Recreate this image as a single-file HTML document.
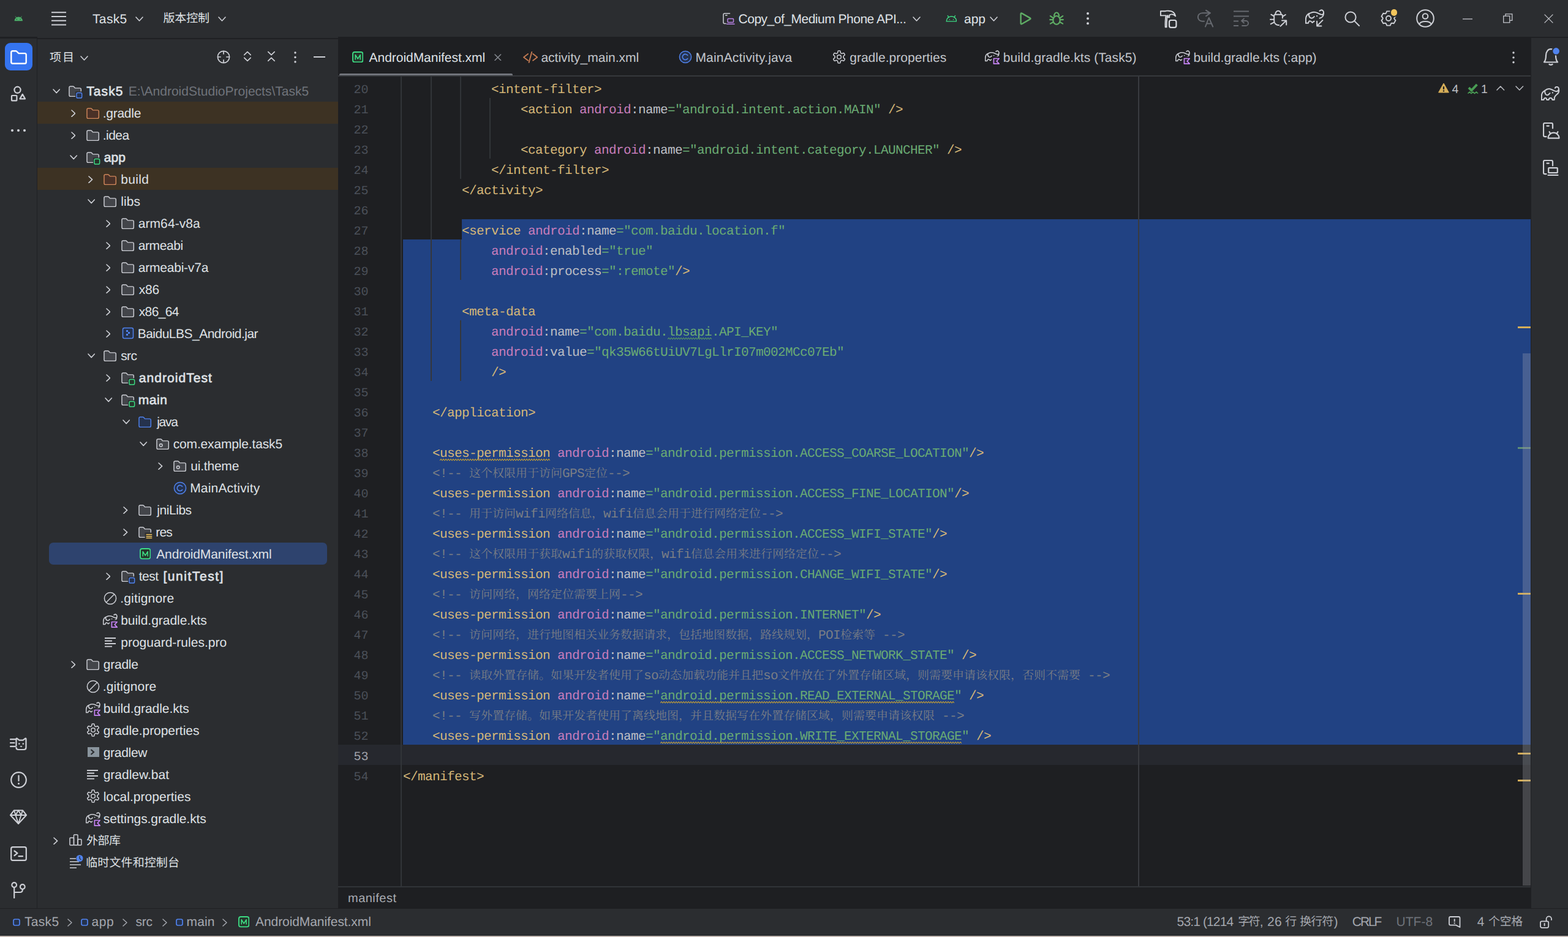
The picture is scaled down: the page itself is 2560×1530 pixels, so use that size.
<!DOCTYPE html>
<html lang="zh-CN"><head><meta charset="utf-8"><title>Task5 – AndroidManifest.xml</title>
<style>
html,body{margin:0;padding:0;background:#2b2d30;}
body{width:2560px;height:1530px;position:relative;overflow:hidden;font-family:'Liberation Sans',sans-serif;text-rendering:geometricPrecision;-webkit-font-smoothing:antialiased;}
.cl{position:absolute;left:658px;height:33px;line-height:33px;white-space:pre;font-family:'Liberation Mono',monospace;font-size:21px;letter-spacing:-0.602px;color:#bcbec4;margin-top:4.4px}
.t{display:inline-block;overflow:visible;white-space:pre;vertical-align:top;height:33px}
.k{font-family:'Liberation Mono','Noto Serif CJK SC',serif;font-size:19px;letter-spacing:0;color:#7a7e85;overflow:visible}
.ln{position:absolute;left:552px;width:49.4px;height:33px;line-height:33px;text-align:right;font-family:'Liberation Mono',monospace;font-size:20px;letter-spacing:0;margin-top:3.6px}
</style></head>
<body>
<div style="position:absolute;left:0px;top:0px;width:2560px;height:1530px;background:#2b2d30;"></div>
<div style="position:absolute;left:0px;top:60px;width:61px;height:3px;background:#1f2023;"></div>
<div style="position:absolute;left:61px;top:62px;width:491px;height:2px;background:#1f2023;"></div>
<div style="position:absolute;left:60px;top:62px;width:1px;height:1422px;background:#1f2023;"></div>
<div style="position:absolute;left:552px;top:60px;width:1948px;height:1424px;background:#1e1f22;"></div>
<div style="position:absolute;left:2499px;top:62px;width:1px;height:1422px;background:#1f2023;"></div>
<div style="position:absolute;left:2500px;top:60px;width:60px;height:2px;background:#1f2023;"></div>
<div style="position:absolute;left:0px;top:1483px;width:2560px;height:1px;background:#1f2023;"></div>
<div style="position:absolute;left:0px;top:1527px;width:2560px;height:1px;background:#202326;"></div>
<div style="position:absolute;left:0px;top:1528px;width:2560px;height:2px;background:#c3b8b2;"></div>
<svg style="position:absolute;left:22.5px;top:25.5px" width="14.5" height="9" viewBox="0 0 24 14" fill="none" ><path d="M1 13 A11 11 0 0 1 23 13 Z" fill="#4caf6a"/><path d="M6.2 4.6 L3.8 0.8 M17.8 4.6 L20.2 0.8" stroke="#4caf6a" stroke-width="1.4" stroke-linecap="round"/><circle cx="7.2" cy="8.6" r="1.1" fill="#2b2d30"/><circle cx="16.8" cy="8.6" r="1.1" fill="#2b2d30"/></svg>
<svg style="position:absolute;left:84px;top:18.6px" width="24" height="23" viewBox="0 0 24 23" fill="none" ><path d="M0 1.2 H24 M0 8 H24 M0 14.8 H24 M0 21.6 H24" stroke="#ced0d6" stroke-width="2"/></svg>
<div style="position:absolute;left:151.00px;top:17px;height:30px;line-height:30px;font-family:'Liberation Sans',sans-serif;font-size:21px;color:#dfe1e5;white-space:pre;letter-spacing:0.350px;">Task5</div>
<svg style="position:absolute;left:220.7px;top:26.5px" width="13" height="8" viewBox="-1 -1 13 8" fill="none" ><path d="M0 0 L5.5 6 L11 0" stroke="#ced0d6" stroke-width="1.6" stroke-linecap="round" stroke-linejoin="round"/></svg>
<div style="position:absolute;left:266.50px;top:16px;height:30px;line-height:30px;font-family:'Liberation Sans','Noto Sans CJK SC',sans-serif;font-size:19px;color:#dfe1e5;white-space:pre;letter-spacing:-0.167px;">版本控制</div>
<svg style="position:absolute;left:355.7px;top:26.5px" width="13" height="8" viewBox="-1 -1 13 8" fill="none" ><path d="M0 0 L5.5 6 L11 0" stroke="#ced0d6" stroke-width="1.6" stroke-linecap="round" stroke-linejoin="round"/></svg>
<svg style="position:absolute;left:1180px;top:21px" width="20" height="20" viewBox="0 0 20 20" fill="none" ><path d="M11.5 1 H3 Q1 1 1 3 V15.5 Q1 17.5 3 17.5 H5" stroke="#ced0d6" stroke-width="1.5" stroke-linecap="round" stroke-linejoin="round"/><path d="M4.5 4 H7" stroke="#ced0d6" stroke-width="1.5" stroke-linecap="round"/><rect x="8" y="9.5" width="9.5" height="6" rx="1" stroke="#b982e6" stroke-width="1.5"/><path d="M6.5 18.2 H19" stroke="#b982e6" stroke-width="1.5" stroke-linecap="round"/></svg>
<div style="position:absolute;left:1205.60px;top:17px;height:30px;line-height:30px;font-family:'Liberation Sans',sans-serif;font-size:21px;color:#dfe1e5;white-space:pre;letter-spacing:-0.500px;">Copy_of_Medium Phone API...</div>
<svg style="position:absolute;left:1489.8px;top:26.5px" width="13" height="8" viewBox="-1 -1 13 8" fill="none" ><path d="M0 0 L5.5 6 L11 0" stroke="#ced0d6" stroke-width="1.6" stroke-linecap="round" stroke-linejoin="round"/></svg>
<svg style="position:absolute;left:1543.6px;top:23.8px" width="18.8" height="12.4" viewBox="0 0 24 14" fill="none" ><path d="M1.5 13 A10.5 10.5 0 0 1 22.5 13 Z" stroke="#3ddc84" stroke-width="1.8" stroke-linejoin="round"/><path d="M6.4 4.8 L4.2 1 M17.6 4.8 L19.8 1" stroke="#3ddc84" stroke-width="1.8" stroke-linecap="round"/><circle cx="8" cy="9" r="1.1" fill="#3ddc84"/><circle cx="16" cy="9" r="1.1" fill="#3ddc84"/></svg>
<div style="position:absolute;left:1574.00px;top:17px;height:30px;line-height:30px;font-family:'Liberation Sans',sans-serif;font-size:21px;color:#dfe1e5;white-space:pre;letter-spacing:0.000px;">app</div>
<svg style="position:absolute;left:1615.8px;top:27.0px" width="13" height="8" viewBox="-1 -1 13 8" fill="none" ><path d="M0 0 L5.5 6 L11 0" stroke="#ced0d6" stroke-width="1.6" stroke-linecap="round" stroke-linejoin="round"/></svg>
<svg style="position:absolute;left:1664.8px;top:19.7px" width="20" height="22" viewBox="0 0 20 22" fill="none" ><path d="M1.6 3 Q1.6 0.8 3.5 1.9 L16.6 9.4 Q18.4 10.4 16.6 11.4 L3.5 19 Q1.6 20 1.6 17.8 Z" stroke="#5fad65" stroke-width="2.4" stroke-linejoin="round"/></svg>
<svg style="position:absolute;left:1713px;top:19px" width="24" height="22" viewBox="0 0 24 22" fill="none" ><ellipse cx="12" cy="13.9" rx="5.7" ry="6.9" stroke="#5fad65" stroke-width="2.2"/><path d="M7.9 7.6 A4.1 6.1 0 0 1 16.1 7.6" stroke="#5fad65" stroke-width="2.2"/><path d="M6.5 10.4 L1.8 7.2 M6.2 13.2 H1.2 M6.6 17 L1.9 19.6 M17.5 10.4 L22.2 7.2 M17.8 13.2 H22.8 M17.4 17 L22.1 19.6" stroke="#5fad65" stroke-width="2.2" stroke-linecap="round"/></svg>
<svg style="position:absolute;left:1772.9px;top:19.0px" width="6" height="22.3" viewBox="-3 -11.15 6 22.3" fill="none" ><circle cx="0" cy="-8.15" r="2.0" fill="#ced0d6"/><circle cx="0" cy="0" r="2.0" fill="#ced0d6"/><circle cx="0" cy="8.15" r="2.0" fill="#ced0d6"/></svg>
<svg style="position:absolute;left:1893px;top:15.6px" width="29" height="31" viewBox="0 0 29 31" fill="none" ><path d="M1.9 2.3 H9 C11 1.3 14 1.6 15.5 1.8 C21 2 25 5 26.2 10.4 C23 7 19 6.6 16.2 8.8 V12.4 H13.8 V9.4 H12.7 C12.2 14 11.5 18 11.6 28.3 H9.6 C9.3 20 9.8 14 10.6 9.4 H1.9 Z" stroke="#d7d9de" stroke-width="1.9" stroke-linecap="round" stroke-linejoin="round"/><rect x="16" y="17" width="11.4" height="11.8" rx="2.8" stroke="#d7d9de" stroke-width="2.2"/></svg>
<svg style="position:absolute;left:1954.6px;top:16px" width="27" height="29" viewBox="0 0 27 29" fill="none" ><path d="M21 5.3 H8.5 C3 5.3 0.9 9 0.9 12 C0.9 15.5 3.5 18.7 8 18.7 H11 M14 0.8 L21 5.3 L14 10.2" stroke="#676a70" stroke-width="2" stroke-linecap="round" stroke-linejoin="round"/><path d="M13 27.5 L18.7 13 L25.2 27.5 M15 22.5 H23" stroke="#676a70" stroke-width="2" stroke-linecap="round" stroke-linejoin="round"/></svg>
<svg style="position:absolute;left:2014.4px;top:16.6px" width="26" height="27" viewBox="0 0 26 27" fill="none" ><path d="M0 1.5 H25 M0 9.5 H25 M0 17.5 H8 M0 25 H8" stroke="#676a70" stroke-width="1.8"/><path d="M14 25 H20 A4 4 0 0 0 20 17 H13.5 M17 13.5 L13 17 L17 20.5" stroke="#676a70" stroke-width="1.8" stroke-linecap="round" stroke-linejoin="round"/></svg>
<svg style="position:absolute;left:2073px;top:16px" width="29" height="29" viewBox="0 0 29 29" fill="none" ><path d="M9.2 7.5 A4.6 5.8 0 0 1 18.5 7.5" stroke="#ced0d6" stroke-width="2"/><path d="M20.9 13.5 V9.7 Q20.9 7.7 18.9 7.7 H9.2 Q7.2 7.7 7.2 9.7 V18 A6.9 6.9 0 0 0 15.1 25" stroke="#ced0d6" stroke-width="2" stroke-linecap="round" stroke-linejoin="round"/><path d="M2.3 7.7 L6.7 10.4 M0.9 15.7 H6.7 M1.8 23.2 L6.7 20.6 M21.3 10.8 L25.8 8" stroke="#ced0d6" stroke-width="2" stroke-linecap="round"/><path d="M17.4 26.8 L27 17.6 M20 17.6 H27.2 V24.6" stroke="#ced0d6" stroke-width="2" stroke-linecap="round" stroke-linejoin="round"/></svg>
<svg style="position:absolute;left:2131.3px;top:15.4px" width="32" height="29" viewBox="0 0 32 29" fill="none" ><path d="M0.9 22.8 V17 C0.9 11.5 4 7.7 8 6.5 C12 4.2 17 4.8 20 6.2 C23 7.6 25 9.2 28 9 C30.5 8.6 30.6 4.5 29 2.6 C27.5 0.9 25 1.6 23.5 2.8" stroke="#ced0d6" stroke-width="2" stroke-linecap="round" stroke-linejoin="round"/><path d="M29.6 7 C30 10 28.5 13.4 23.5 14.8" stroke="#ced0d6" stroke-width="2" stroke-linecap="round" stroke-linejoin="round"/><path d="M6 7.6 C5.6 10 6.2 12.6 8.5 14.2 C11 15.6 13.5 13.5 14.7 12.1" stroke="#ced0d6" stroke-width="2" stroke-linecap="round" stroke-linejoin="round"/><circle cx="19.1" cy="11.2" r="1.15" fill="#ced0d6"/><path d="M0.9 22.8 H4.9 C5.2 21 5.6 20.2 6.8 19.4 C8.5 18.6 9.8 20 11.5 21.9 C13 20.5 13.8 20 14.7 19.7" stroke="#ced0d6" stroke-width="2" stroke-linecap="round" stroke-linejoin="round"/><path d="M28.4 18.1 L19.3 27.2 M19.1 19.7 V27.4 H26.4" stroke="#ced0d6" stroke-width="2" stroke-linecap="round" stroke-linejoin="round"/></svg>
<svg style="position:absolute;left:2194.6px;top:18.2px" width="25" height="25" viewBox="0 0 25 25" fill="none" ><circle cx="10" cy="10" r="8.6" stroke="#ced0d6" stroke-width="2"/><path d="M16.4 16.4 L24 24" stroke="#ced0d6" stroke-width="2" stroke-linecap="round"/></svg>
<svg style="position:absolute;left:2253.6px;top:16px" width="26" height="28.0" viewBox="0 -1 26 28" fill="none" ><path d="M10.10 1.36 L15.90 1.36 Q16.35 3.79 17.60 5.03 Q19.30 5.49 21.63 4.66 L24.54 9.69 Q22.65 11.30 22.20 13.00 Q22.65 14.70 24.54 16.31 L21.63 21.34 Q19.30 20.51 17.60 20.97 Q16.35 22.21 15.90 24.64 L10.10 24.64 Q9.65 22.21 8.40 20.97 Q6.70 20.51 4.37 21.34 L1.46 16.31 Q3.35 14.70 3.80 13.00 Q3.35 11.30 1.46 9.69 L4.37 4.66 Q6.70 5.49 8.40 5.03 Q9.65 3.79 10.10 1.36 Z" stroke="#ced0d6" stroke-width="1.9" stroke-linejoin="round"/><circle cx="13" cy="13" r="4" stroke="#ced0d6" stroke-width="1.9"/></svg>
<div style="position:absolute;left:2268.8px;top:13.400000000000002px;width:14.4px;height:14.4px;border-radius:50%;background:#2b2d30"></div>
<div style="position:absolute;left:2270.6px;top:15.200000000000001px;width:10.8px;height:10.8px;border-radius:50%;background:#f2c55c"></div>
<svg style="position:absolute;left:2312px;top:14.8px" width="30" height="30" viewBox="0 0 30 30" fill="none" ><circle cx="15" cy="15" r="13.8" stroke="#ced0d6" stroke-width="2"/><circle cx="15" cy="11.5" r="4.3" stroke="#ced0d6" stroke-width="2"/><path d="M5.2 24.6 C8 18.6 22 18.6 24.8 24.6" stroke="#ced0d6" stroke-width="2" stroke-linecap="round"/></svg>
<svg style="position:absolute;left:2388px;top:29.5px" width="16" height="2" viewBox="0 0 16 2" fill="none" ><path d="M0 1 H16" stroke="#c4c6cc" stroke-width="1.3"/></svg>
<svg style="position:absolute;left:2454px;top:22px" width="16" height="16" viewBox="0 0 16 16" fill="none" ><path d="M0.7 4.2 H10.8 V14.8 H0.7 Z" stroke="#c4c6cc" stroke-width="1.3"/><path d="M4 4 V0.8 H14.8 V11.4 H11" stroke="#c4c6cc" stroke-width="1.3"/></svg>
<svg style="position:absolute;left:2521px;top:23px" width="15" height="15" viewBox="0 0 15 15" fill="none" ><path d="M0.6 0.6 L14.4 14.4 M14.4 0.6 L0.6 14.4" stroke="#c4c6cc" stroke-width="1.3"/></svg>
<div style="position:absolute;left:8px;top:70px;width:45px;height:45px;border-radius:9px;background:#3574f0"></div>
<svg style="position:absolute;left:16.5px;top:81.5px" width="27" height="23" viewBox="0 0 27 23" fill="none" ><path d="M1.3 3.6 Q1.3 1.3 3.6 1.3 H8.6 Q9.6 1.3 10.3 2 L13 4.6 Q13.5 5.1 14.3 5.1 H23.4 Q25.7 5.1 25.7 7.4 V19.4 Q25.7 21.7 23.4 21.7 H3.6 Q1.3 21.7 1.3 19.4 Z" stroke="#ffffff" stroke-width="2.4" stroke-linejoin="round"/></svg>
<svg style="position:absolute;left:17px;top:139.5px" width="27" height="27" viewBox="0 0 27 27" fill="none" ><circle cx="11.5" cy="6.8" r="5.1" stroke="#ced0d6" stroke-width="2.2"/><rect x="2" y="16" width="8.4" height="8.3" rx="0.8" stroke="#ced0d6" stroke-width="2.2"/><path d="M19.75 13.9 L24 21.4 H15.5 Z" stroke="#ced0d6" stroke-width="2.2" stroke-linejoin="round"/></svg>
<svg style="position:absolute;left:17px;top:210px" width="26" height="6" viewBox="0 0 26 6" fill="none" ><circle cx="3" cy="3" r="2.1" fill="#ced0d6"/><circle cx="13" cy="3" r="2.1" fill="#ced0d6"/><circle cx="23" cy="3" r="2.1" fill="#ced0d6"/></svg>
<svg style="position:absolute;left:16.4px;top:1204px" width="28" height="22" viewBox="0 0 28 22" fill="none" ><path d="M1 3.2 H9.5 M1 9 H7.5 M1 14.8 H9" stroke="#ced0d6" stroke-width="2.2" stroke-linecap="round"/><path d="M10.5 14 V2.6 Q10.5 1 11.8 1.8 L15.5 4.6 H21.5 L25.2 1.8 Q26.5 1 26.5 2.6 V16.5 Q26.5 20 23 20 H14 Q10.5 20 10.5 16.5" stroke="#ced0d6" stroke-width="2.2" stroke-linecap="round" stroke-linejoin="round"/><circle cx="15.3" cy="10.5" r="1.3" fill="#ced0d6"/><circle cx="21.8" cy="10.5" r="1.3" fill="#ced0d6"/><path d="M17 14.4 H20 L18.5 16 Z" fill="#ced0d6" stroke="#ced0d6" stroke-width="0.8" stroke-linejoin="round"/></svg>
<svg style="position:absolute;left:16.5px;top:1260.4px" width="27" height="27" viewBox="0 0 27 27" fill="none" ><circle cx="13.5" cy="13.5" r="12.3" stroke="#ced0d6" stroke-width="2.2"/><path d="M13.5 6.5 V15" stroke="#ced0d6" stroke-width="2.2" stroke-linecap="round"/><circle cx="13.5" cy="19.6" r="1.5" fill="#ced0d6"/></svg>
<svg style="position:absolute;left:16px;top:1321.6px" width="28" height="24" viewBox="0 0 28 24" fill="none" ><path d="M7 1.2 H21 L27 9 L14 23 L1 9 Z" stroke="#ced0d6" stroke-width="2.1" stroke-linejoin="round"/><path d="M1 9 H27 M7 1.2 L9.5 9 L14 23 L18.5 9 L21 1.2 M9.5 9 L14 1.2 L18.5 9" stroke="#ced0d6" stroke-width="1.9" stroke-linejoin="round"/></svg>
<svg style="position:absolute;left:16.5px;top:1382px" width="27" height="24" viewBox="0 0 27 24" fill="none" ><rect x="1.2" y="1.2" width="24.6" height="21.6" rx="2.6" stroke="#ced0d6" stroke-width="2.2"/><path d="M6.5 7.5 L11.5 11.2 L6.5 15 M13.5 16.2 H20" stroke="#ced0d6" stroke-width="2.2" stroke-linecap="round" stroke-linejoin="round"/></svg>
<svg style="position:absolute;left:17.6px;top:1440.2px" width="24" height="27" viewBox="0 0 24 27" fill="none" ><circle cx="5.2" cy="5" r="3.8" stroke="#ced0d6" stroke-width="2.2"/><circle cx="18.8" cy="8" r="3.8" stroke="#ced0d6" stroke-width="2.2"/><path d="M5.2 9 V26 M18.8 12 V13 Q18.8 17 14.5 17 H5.2" stroke="#ced0d6" stroke-width="2.2" stroke-linecap="round" stroke-linejoin="round"/></svg>
<svg style="position:absolute;left:2518.5px;top:77px" width="29" height="31" viewBox="0 -2 29 31" fill="none" ><path d="M2 22.5 C5 19 5 16 5 11.5 C5 5.5 8.5 1.2 13 1.2 C17.5 1.2 21 5.5 21 11.5 C21 16 21 19 24 22.5 Z" stroke="#ced0d6" stroke-width="2.2" stroke-linejoin="round"/><path d="M10.5 26 Q13 27.8 15.5 26" stroke="#ced0d6" stroke-width="2.2" stroke-linecap="round"/><circle cx="21.6" cy="4.4" r="7.2" fill="#2b2d30"/><circle cx="21.6" cy="4.4" r="5.3" fill="#5083ee"/></svg>
<svg style="position:absolute;left:2515.6px;top:141.2px" width="31" height="23.5" viewBox="0 0 31 23.5" fill="none" ><path d="M0.9 21.9 V15.5 C0.9 11.5 3 8.5 6.1 7.1 C8.5 5 10.5 4 13 4 C16 4 18 5.6 20.5 6.8 C22.5 7.8 24 8.6 25.5 8.2 C27.8 7.6 29.4 5.6 28.8 3.2 C28.2 1 26 0.4 24.6 1 C23.6 1.5 23.1 2.1 22.9 2.7" stroke="#ced0d6" stroke-width="2" stroke-linecap="round" stroke-linejoin="round"/><path d="M29.2 6 C29.4 9 28 11.5 26 13 C24 14.6 22.4 16 21.9 18 L21.6 21.9 H18.5 C18.3 20 17 18.9 15.5 18.9 C14 18.9 12.7 20 12.5 21.9 H9.4 C9.2 20 8.4 18.9 7 18.9 C5.6 18.9 4.6 20 4.4 21.9 H0.9" stroke="#ced0d6" stroke-width="2" stroke-linecap="round" stroke-linejoin="round"/><path d="M6.1 7.1 C6 9.5 6.4 11.5 7.6 13 C9 14.8 11 14.6 12.4 13.3 C13.2 12.5 13.9 11.7 14.5 11.1" stroke="#ced0d6" stroke-width="2" stroke-linecap="round" stroke-linejoin="round"/><circle cx="18.9" cy="10.4" r="1.15" fill="#ced0d6"/></svg>
<svg style="position:absolute;left:2518.6px;top:200.4px" width="28" height="27" viewBox="0 0 28 27" fill="none" ><path d="M16 9.5 V3.2 Q16 1 13.8 1 H3.2 Q1 1 1 3.2 V21 Q1 23.2 3.2 23.2 H5.5" stroke="#ced0d6" stroke-width="2.2" stroke-linecap="round" stroke-linejoin="round"/><path d="M6.5 5.6 H9.8" stroke="#ced0d6" stroke-width="2.2" stroke-linecap="round"/><path d="M8.5 25.6 A9 9 0 0 1 26.5 25.6 Z" stroke="#ced0d6" stroke-width="2.2" stroke-linejoin="round"/><path d="M12.4 18.4 L10.6 15.2 M22.6 18.4 L24.4 15.2" stroke="#ced0d6" stroke-width="2.2" stroke-linecap="round"/></svg>
<svg style="position:absolute;left:2518.6px;top:260.6px" width="26" height="27" viewBox="0 0 26 27" fill="none" ><path d="M16 9.5 V3.2 Q16 1 13.8 1 H3.2 Q1 1 1 3.2 V21 Q1 23.2 3.2 23.2 H5.5" stroke="#ced0d6" stroke-width="2.2" stroke-linecap="round" stroke-linejoin="round"/><path d="M6.5 5.6 H9.8" stroke="#ced0d6" stroke-width="2.2" stroke-linecap="round"/><rect x="9.2" y="13.2" width="14.6" height="8" rx="0.8" stroke="#ced0d6" stroke-width="2.2"/><path d="M8.5 25 H24.5" stroke="#ced0d6" stroke-width="2.2" stroke-linecap="round"/></svg>
<div style="position:absolute;left:81.00px;top:80px;height:30px;line-height:30px;font-family:'Liberation Sans','Noto Sans CJK SC',sans-serif;font-size:19px;color:#dfe1e5;white-space:pre;letter-spacing:2.000px;">项目</div>
<svg style="position:absolute;left:130.5px;top:91.2px" width="13" height="8" viewBox="-1 -1 13 8" fill="none" ><path d="M0 0 L5.5 6 L11 0" stroke="#ced0d6" stroke-width="1.6" stroke-linecap="round" stroke-linejoin="round"/></svg>
<svg style="position:absolute;left:354px;top:82px" width="22" height="22" viewBox="0 0 22 22" fill="none" ><circle cx="11" cy="11" r="9.6" stroke="#ced0d6" stroke-width="1.7"/><path d="M11 1.4 V6.8 M11 15.2 V20.6 M1.4 11 H6.8 M15.2 11 H20.6" stroke="#ced0d6" stroke-width="1.7"/></svg>
<svg style="position:absolute;left:397px;top:83.4px" width="14" height="18" viewBox="0 0 14 18" fill="none" ><path d="M1.8 6.7 L7 1.6 L12.2 6.7 M1.8 11.3 L7 16.4 L12.2 11.3" stroke="#ced0d6" stroke-width="1.7" stroke-linecap="round" stroke-linejoin="round"/></svg>
<svg style="position:absolute;left:436px;top:83.4px" width="14" height="18" viewBox="0 0 14 18" fill="none" ><path d="M1.8 1.6 L7 6.7 L12.2 1.6 M1.8 16.4 L7 11.3 L12.2 16.4" stroke="#ced0d6" stroke-width="1.7" stroke-linecap="round" stroke-linejoin="round"/></svg>
<svg style="position:absolute;left:479px;top:82.5px" width="6" height="21.0" viewBox="-3 -10.5 6 21.0" fill="none" ><circle cx="0" cy="-7.5" r="1.7" fill="#ced0d6"/><circle cx="0" cy="0" r="1.7" fill="#ced0d6"/><circle cx="0" cy="7.5" r="1.7" fill="#ced0d6"/></svg>
<div style="position:absolute;left:511.5px;top:92px;width:19.5px;height:1.7px;background:#ced0d6"></div>
<svg style="position:absolute;left:85.8px;top:145.0px" width="12.4" height="7.6" viewBox="-1 -1 12.4 7.6" fill="none" ><path d="M0 0 L5.2 5.6 L10.4 0" stroke="#ced0d6" stroke-width="1.6" stroke-linecap="round" stroke-linejoin="round"/></svg>
<svg style="position:absolute;left:112.0px;top:139.6px" width="24.2" height="23.2" viewBox="0 0 25 24" fill="none" ><path d="M1 3.2 Q1 1 3.2 1 H7.3 Q8.2 1 8.8 1.6 L10.6 3.6 Q11 4 11.6 4 H18.8 Q21 4 21 6.2 V15.8 Q21 18 18.8 18 H3.2 Q1 18 1 15.8 Z" fill="#43454a" stroke="#ced0d6" stroke-width="1.5" stroke-linejoin="round"/><rect x="11.4" y="9.8" width="13" height="13" fill="#2b2d30"/><rect x="13.4" y="11.8" width="9" height="9" rx="2.2" fill="#25324d" stroke="#5083ee" stroke-width="1.5"/></svg>
<div style="position:absolute;left:141.20px;top:135px;height:30px;line-height:30px;font-family:'Liberation Sans',sans-serif;font-size:21px;color:#dfe1e5;white-space:pre;-webkit-text-stroke:0.65px currentColor;letter-spacing:1.100px;">Task5</div>
<div style="position:absolute;left:209.80px;top:135px;height:30px;line-height:30px;font-family:'Liberation Sans',sans-serif;font-size:21px;color:#6f737a;white-space:pre;letter-spacing:0.007px;">E:\AndroidStudioProjects\Task5</div>
<div style="position:absolute;left:61px;top:166px;width:491px;height:36px;background:#3d3223;"></div>
<svg style="position:absolute;left:115.8px;top:178.5px" width="7.6" height="12.4" viewBox="-1 -1 7.6 12.4" fill="none" ><path d="M0 0 L5.6 5.2 L0 10.4" stroke="#ced0d6" stroke-width="1.6" stroke-linecap="round" stroke-linejoin="round"/></svg>
<svg style="position:absolute;left:140.5px;top:175.6px" width="24.2" height="23.2" viewBox="0 0 25 24" fill="none" ><path d="M1 3.2 Q1 1 3.2 1 H7.3 Q8.2 1 8.8 1.6 L10.6 3.6 Q11 4 11.6 4 H18.8 Q21 4 21 6.2 V15.8 Q21 18 18.8 18 H3.2 Q1 18 1 15.8 Z" fill="#4a3127" stroke="#d0875b" stroke-width="1.5" stroke-linejoin="round"/></svg>
<div style="position:absolute;left:167.70px;top:171px;height:30px;line-height:30px;font-family:'Liberation Sans',sans-serif;font-size:21px;color:#dfe1e5;white-space:pre;letter-spacing:-0.250px;">.gradle</div>
<svg style="position:absolute;left:115.8px;top:214.5px" width="7.6" height="12.4" viewBox="-1 -1 7.6 12.4" fill="none" ><path d="M0 0 L5.6 5.2 L0 10.4" stroke="#ced0d6" stroke-width="1.6" stroke-linecap="round" stroke-linejoin="round"/></svg>
<svg style="position:absolute;left:140.5px;top:211.6px" width="24.2" height="23.2" viewBox="0 0 25 24" fill="none" ><path d="M1 3.2 Q1 1 3.2 1 H7.3 Q8.2 1 8.8 1.6 L10.6 3.6 Q11 4 11.6 4 H18.8 Q21 4 21 6.2 V15.8 Q21 18 18.8 18 H3.2 Q1 18 1 15.8 Z" fill="#43454a" stroke="#ced0d6" stroke-width="1.5" stroke-linejoin="round"/></svg>
<div style="position:absolute;left:167.70px;top:207px;height:30px;line-height:30px;font-family:'Liberation Sans',sans-serif;font-size:21px;color:#dfe1e5;white-space:pre;letter-spacing:-0.525px;">.idea</div>
<svg style="position:absolute;left:114.3px;top:253.0px" width="12.4" height="7.6" viewBox="-1 -1 12.4 7.6" fill="none" ><path d="M0 0 L5.2 5.6 L10.4 0" stroke="#ced0d6" stroke-width="1.6" stroke-linecap="round" stroke-linejoin="round"/></svg>
<svg style="position:absolute;left:140.5px;top:247.6px" width="24.2" height="23.2" viewBox="0 0 25 24" fill="none" ><path d="M1 3.2 Q1 1 3.2 1 H7.3 Q8.2 1 8.8 1.6 L10.6 3.6 Q11 4 11.6 4 H18.8 Q21 4 21 6.2 V15.8 Q21 18 18.8 18 H3.2 Q1 18 1 15.8 Z" fill="#43454a" stroke="#ced0d6" stroke-width="1.5" stroke-linejoin="round"/><rect x="11.4" y="9.8" width="13" height="13" fill="#2b2d30"/><rect x="13.4" y="11.8" width="9" height="9" rx="2.2" fill="#25352b" stroke="#3ddc84" stroke-width="1.5"/></svg>
<div style="position:absolute;left:169.70px;top:243px;height:30px;line-height:30px;font-family:'Liberation Sans',sans-serif;font-size:21px;color:#dfe1e5;white-space:pre;-webkit-text-stroke:0.65px currentColor;letter-spacing:0.150px;">app</div>
<div style="position:absolute;left:61px;top:274px;width:491px;height:36px;background:#3d3223;"></div>
<svg style="position:absolute;left:144.29999999999998px;top:286.5px" width="7.6" height="12.4" viewBox="-1 -1 7.6 12.4" fill="none" ><path d="M0 0 L5.6 5.2 L0 10.4" stroke="#ced0d6" stroke-width="1.6" stroke-linecap="round" stroke-linejoin="round"/></svg>
<svg style="position:absolute;left:169.0px;top:283.6px" width="24.2" height="23.2" viewBox="0 0 25 24" fill="none" ><path d="M1 3.2 Q1 1 3.2 1 H7.3 Q8.2 1 8.8 1.6 L10.6 3.6 Q11 4 11.6 4 H18.8 Q21 4 21 6.2 V15.8 Q21 18 18.8 18 H3.2 Q1 18 1 15.8 Z" fill="#4a3127" stroke="#d0875b" stroke-width="1.5" stroke-linejoin="round"/></svg>
<div style="position:absolute;left:197.20px;top:279px;height:30px;line-height:30px;font-family:'Liberation Sans',sans-serif;font-size:21px;color:#dfe1e5;white-space:pre;letter-spacing:0.350px;">build</div>
<svg style="position:absolute;left:142.8px;top:325.0px" width="12.4" height="7.6" viewBox="-1 -1 12.4 7.6" fill="none" ><path d="M0 0 L5.2 5.6 L10.4 0" stroke="#ced0d6" stroke-width="1.6" stroke-linecap="round" stroke-linejoin="round"/></svg>
<svg style="position:absolute;left:169.0px;top:319.6px" width="24.2" height="23.2" viewBox="0 0 25 24" fill="none" ><path d="M1 3.2 Q1 1 3.2 1 H7.3 Q8.2 1 8.8 1.6 L10.6 3.6 Q11 4 11.6 4 H18.8 Q21 4 21 6.2 V15.8 Q21 18 18.8 18 H3.2 Q1 18 1 15.8 Z" fill="#43454a" stroke="#ced0d6" stroke-width="1.5" stroke-linejoin="round"/></svg>
<div style="position:absolute;left:197.20px;top:315px;height:30px;line-height:30px;font-family:'Liberation Sans',sans-serif;font-size:21px;color:#dfe1e5;white-space:pre;letter-spacing:0.067px;">libs</div>
<svg style="position:absolute;left:172.79999999999998px;top:358.5px" width="7.6" height="12.4" viewBox="-1 -1 7.6 12.4" fill="none" ><path d="M0 0 L5.6 5.2 L0 10.4" stroke="#ced0d6" stroke-width="1.6" stroke-linecap="round" stroke-linejoin="round"/></svg>
<svg style="position:absolute;left:197.5px;top:355.6px" width="24.2" height="23.2" viewBox="0 0 25 24" fill="none" ><path d="M1 3.2 Q1 1 3.2 1 H7.3 Q8.2 1 8.8 1.6 L10.6 3.6 Q11 4 11.6 4 H18.8 Q21 4 21 6.2 V15.8 Q21 18 18.8 18 H3.2 Q1 18 1 15.8 Z" fill="#43454a" stroke="#ced0d6" stroke-width="1.5" stroke-linejoin="round"/></svg>
<div style="position:absolute;left:225.70px;top:351px;height:30px;line-height:30px;font-family:'Liberation Sans',sans-serif;font-size:21px;color:#dfe1e5;white-space:pre;letter-spacing:0.087px;">arm64-v8a</div>
<svg style="position:absolute;left:172.79999999999998px;top:394.5px" width="7.6" height="12.4" viewBox="-1 -1 7.6 12.4" fill="none" ><path d="M0 0 L5.6 5.2 L0 10.4" stroke="#ced0d6" stroke-width="1.6" stroke-linecap="round" stroke-linejoin="round"/></svg>
<svg style="position:absolute;left:197.5px;top:391.6px" width="24.2" height="23.2" viewBox="0 0 25 24" fill="none" ><path d="M1 3.2 Q1 1 3.2 1 H7.3 Q8.2 1 8.8 1.6 L10.6 3.6 Q11 4 11.6 4 H18.8 Q21 4 21 6.2 V15.8 Q21 18 18.8 18 H3.2 Q1 18 1 15.8 Z" fill="#43454a" stroke="#ced0d6" stroke-width="1.5" stroke-linejoin="round"/></svg>
<div style="position:absolute;left:225.70px;top:387px;height:30px;line-height:30px;font-family:'Liberation Sans',sans-serif;font-size:21px;color:#dfe1e5;white-space:pre;letter-spacing:-0.383px;">armeabi</div>
<svg style="position:absolute;left:172.79999999999998px;top:430.5px" width="7.6" height="12.4" viewBox="-1 -1 7.6 12.4" fill="none" ><path d="M0 0 L5.6 5.2 L0 10.4" stroke="#ced0d6" stroke-width="1.6" stroke-linecap="round" stroke-linejoin="round"/></svg>
<svg style="position:absolute;left:197.5px;top:427.6px" width="24.2" height="23.2" viewBox="0 0 25 24" fill="none" ><path d="M1 3.2 Q1 1 3.2 1 H7.3 Q8.2 1 8.8 1.6 L10.6 3.6 Q11 4 11.6 4 H18.8 Q21 4 21 6.2 V15.8 Q21 18 18.8 18 H3.2 Q1 18 1 15.8 Z" fill="#43454a" stroke="#ced0d6" stroke-width="1.5" stroke-linejoin="round"/></svg>
<div style="position:absolute;left:225.70px;top:423px;height:30px;line-height:30px;font-family:'Liberation Sans',sans-serif;font-size:21px;color:#dfe1e5;white-space:pre;letter-spacing:-0.210px;">armeabi-v7a</div>
<svg style="position:absolute;left:172.79999999999998px;top:466.5px" width="7.6" height="12.4" viewBox="-1 -1 7.6 12.4" fill="none" ><path d="M0 0 L5.6 5.2 L0 10.4" stroke="#ced0d6" stroke-width="1.6" stroke-linecap="round" stroke-linejoin="round"/></svg>
<svg style="position:absolute;left:197.5px;top:463.6px" width="24.2" height="23.2" viewBox="0 0 25 24" fill="none" ><path d="M1 3.2 Q1 1 3.2 1 H7.3 Q8.2 1 8.8 1.6 L10.6 3.6 Q11 4 11.6 4 H18.8 Q21 4 21 6.2 V15.8 Q21 18 18.8 18 H3.2 Q1 18 1 15.8 Z" fill="#43454a" stroke="#ced0d6" stroke-width="1.5" stroke-linejoin="round"/></svg>
<div style="position:absolute;left:226.70px;top:459px;height:30px;line-height:30px;font-family:'Liberation Sans',sans-serif;font-size:21px;color:#dfe1e5;white-space:pre;letter-spacing:-0.150px;">x86</div>
<svg style="position:absolute;left:172.79999999999998px;top:502.5px" width="7.6" height="12.4" viewBox="-1 -1 7.6 12.4" fill="none" ><path d="M0 0 L5.6 5.2 L0 10.4" stroke="#ced0d6" stroke-width="1.6" stroke-linecap="round" stroke-linejoin="round"/></svg>
<svg style="position:absolute;left:197.5px;top:499.6px" width="24.2" height="23.2" viewBox="0 0 25 24" fill="none" ><path d="M1 3.2 Q1 1 3.2 1 H7.3 Q8.2 1 8.8 1.6 L10.6 3.6 Q11 4 11.6 4 H18.8 Q21 4 21 6.2 V15.8 Q21 18 18.8 18 H3.2 Q1 18 1 15.8 Z" fill="#43454a" stroke="#ced0d6" stroke-width="1.5" stroke-linejoin="round"/></svg>
<div style="position:absolute;left:226.70px;top:495px;height:30px;line-height:30px;font-family:'Liberation Sans',sans-serif;font-size:21px;color:#dfe1e5;white-space:pre;letter-spacing:-0.620px;">x86_64</div>
<svg style="position:absolute;left:172.79999999999998px;top:538.5px" width="7.6" height="12.4" viewBox="-1 -1 7.6 12.4" fill="none" ><path d="M0 0 L5.6 5.2 L0 10.4" stroke="#ced0d6" stroke-width="1.6" stroke-linecap="round" stroke-linejoin="round"/></svg>
<svg style="position:absolute;left:198.5px;top:534px" width="20" height="20" viewBox="0 0 20 20" fill="none" ><rect x="1.5" y="1.5" width="17" height="17" rx="2.5" fill="#25324d" stroke="#5083ee" stroke-width="1.5"/><rect x="7" y="5" width="3" height="3" fill="#5083ee"/><rect x="10" y="8" width="3" height="3" fill="#5083ee"/><rect x="7" y="11" width="3" height="3" fill="#5083ee"/></svg>
<div style="position:absolute;left:224.70px;top:531px;height:30px;line-height:30px;font-family:'Liberation Sans',sans-serif;font-size:21px;color:#dfe1e5;white-space:pre;letter-spacing:-0.511px;">BaiduLBS_Android.jar</div>
<svg style="position:absolute;left:142.8px;top:577.0px" width="12.4" height="7.6" viewBox="-1 -1 12.4 7.6" fill="none" ><path d="M0 0 L5.2 5.6 L10.4 0" stroke="#ced0d6" stroke-width="1.6" stroke-linecap="round" stroke-linejoin="round"/></svg>
<svg style="position:absolute;left:169.0px;top:571.6px" width="24.2" height="23.2" viewBox="0 0 25 24" fill="none" ><path d="M1 3.2 Q1 1 3.2 1 H7.3 Q8.2 1 8.8 1.6 L10.6 3.6 Q11 4 11.6 4 H18.8 Q21 4 21 6.2 V15.8 Q21 18 18.8 18 H3.2 Q1 18 1 15.8 Z" fill="#43454a" stroke="#ced0d6" stroke-width="1.5" stroke-linejoin="round"/></svg>
<div style="position:absolute;left:197.20px;top:567px;height:30px;line-height:30px;font-family:'Liberation Sans',sans-serif;font-size:21px;color:#dfe1e5;white-space:pre;letter-spacing:-0.600px;">src</div>
<svg style="position:absolute;left:172.79999999999998px;top:610.5px" width="7.6" height="12.4" viewBox="-1 -1 7.6 12.4" fill="none" ><path d="M0 0 L5.6 5.2 L0 10.4" stroke="#ced0d6" stroke-width="1.6" stroke-linecap="round" stroke-linejoin="round"/></svg>
<svg style="position:absolute;left:197.5px;top:607.6px" width="24.2" height="23.2" viewBox="0 0 25 24" fill="none" ><path d="M1 3.2 Q1 1 3.2 1 H7.3 Q8.2 1 8.8 1.6 L10.6 3.6 Q11 4 11.6 4 H18.8 Q21 4 21 6.2 V15.8 Q21 18 18.8 18 H3.2 Q1 18 1 15.8 Z" fill="#43454a" stroke="#ced0d6" stroke-width="1.5" stroke-linejoin="round"/><rect x="11.4" y="9.8" width="13" height="13" fill="#2b2d30"/><rect x="13.4" y="11.8" width="9" height="9" rx="2.2" fill="#25352b" stroke="#3ddc84" stroke-width="1.5"/></svg>
<div style="position:absolute;left:226.70px;top:603px;height:30px;line-height:30px;font-family:'Liberation Sans',sans-serif;font-size:21px;color:#dfe1e5;white-space:pre;-webkit-text-stroke:0.65px currentColor;letter-spacing:1.070px;">androidTest</div>
<svg style="position:absolute;left:171.3px;top:649.0px" width="12.4" height="7.6" viewBox="-1 -1 12.4 7.6" fill="none" ><path d="M0 0 L5.2 5.6 L10.4 0" stroke="#ced0d6" stroke-width="1.6" stroke-linecap="round" stroke-linejoin="round"/></svg>
<svg style="position:absolute;left:197.5px;top:643.6px" width="24.2" height="23.2" viewBox="0 0 25 24" fill="none" ><path d="M1 3.2 Q1 1 3.2 1 H7.3 Q8.2 1 8.8 1.6 L10.6 3.6 Q11 4 11.6 4 H18.8 Q21 4 21 6.2 V15.8 Q21 18 18.8 18 H3.2 Q1 18 1 15.8 Z" fill="#43454a" stroke="#ced0d6" stroke-width="1.5" stroke-linejoin="round"/><rect x="11.4" y="9.8" width="13" height="13" fill="#2b2d30"/><rect x="13.4" y="11.8" width="9" height="9" rx="2.2" fill="#25352b" stroke="#3ddc84" stroke-width="1.5"/></svg>
<div style="position:absolute;left:225.70px;top:639px;height:30px;line-height:30px;font-family:'Liberation Sans',sans-serif;font-size:21px;color:#dfe1e5;white-space:pre;-webkit-text-stroke:0.65px currentColor;letter-spacing:0.567px;">main</div>
<svg style="position:absolute;left:199.8px;top:685.0px" width="12.4" height="7.6" viewBox="-1 -1 12.4 7.6" fill="none" ><path d="M0 0 L5.2 5.6 L10.4 0" stroke="#ced0d6" stroke-width="1.6" stroke-linecap="round" stroke-linejoin="round"/></svg>
<svg style="position:absolute;left:226.0px;top:679.6px" width="24.2" height="23.2" viewBox="0 0 25 24" fill="none" ><path d="M1 3.2 Q1 1 3.2 1 H7.3 Q8.2 1 8.8 1.6 L10.6 3.6 Q11 4 11.6 4 H18.8 Q21 4 21 6.2 V15.8 Q21 18 18.8 18 H3.2 Q1 18 1 15.8 Z" fill="#25324d" stroke="#5083ee" stroke-width="1.5" stroke-linejoin="round"/></svg>
<div style="position:absolute;left:256.20px;top:675px;height:30px;line-height:30px;font-family:'Liberation Sans',sans-serif;font-size:21px;color:#dfe1e5;white-space:pre;letter-spacing:-1.267px;">java</div>
<svg style="position:absolute;left:228.3px;top:721.0px" width="12.4" height="7.6" viewBox="-1 -1 12.4 7.6" fill="none" ><path d="M0 0 L5.2 5.6 L10.4 0" stroke="#ced0d6" stroke-width="1.6" stroke-linecap="round" stroke-linejoin="round"/></svg>
<svg style="position:absolute;left:254.5px;top:715.6px" width="24.2" height="23.2" viewBox="0 0 25 24" fill="none" ><path d="M1 3.2 Q1 1 3.2 1 H7.3 Q8.2 1 8.8 1.6 L10.6 3.6 Q11 4 11.6 4 H18.8 Q21 4 21 6.2 V15.8 Q21 18 18.8 18 H3.2 Q1 18 1 15.8 Z" fill="#43454a" stroke="#ced0d6" stroke-width="1.5" stroke-linejoin="round"/><circle cx="8" cy="11.5" r="2.4" stroke="#ced0d6" stroke-width="1.5"/></svg>
<div style="position:absolute;left:282.70px;top:711px;height:30px;line-height:30px;font-family:'Liberation Sans',sans-serif;font-size:21px;color:#dfe1e5;white-space:pre;letter-spacing:-0.156px;">com.example.task5</div>
<svg style="position:absolute;left:258.3px;top:754.5px" width="7.6" height="12.4" viewBox="-1 -1 7.6 12.4" fill="none" ><path d="M0 0 L5.6 5.2 L0 10.4" stroke="#ced0d6" stroke-width="1.6" stroke-linecap="round" stroke-linejoin="round"/></svg>
<svg style="position:absolute;left:283.0px;top:751.6px" width="24.2" height="23.2" viewBox="0 0 25 24" fill="none" ><path d="M1 3.2 Q1 1 3.2 1 H7.3 Q8.2 1 8.8 1.6 L10.6 3.6 Q11 4 11.6 4 H18.8 Q21 4 21 6.2 V15.8 Q21 18 18.8 18 H3.2 Q1 18 1 15.8 Z" fill="#43454a" stroke="#ced0d6" stroke-width="1.5" stroke-linejoin="round"/><circle cx="8" cy="11.5" r="2.4" stroke="#ced0d6" stroke-width="1.5"/></svg>
<div style="position:absolute;left:311.20px;top:747px;height:30px;line-height:30px;font-family:'Liberation Sans',sans-serif;font-size:21px;color:#dfe1e5;white-space:pre;letter-spacing:-0.200px;">ui.theme</div>
<svg style="position:absolute;left:283.0px;top:786.4px" width="22" height="22" viewBox="0 0 22 22" fill="none" ><circle cx="11" cy="11" r="9.6" fill="#25324d" stroke="#5083ee" stroke-width="1.5"/><path d="M14.6 8.3 A4.6 4.6 0 1 0 14.6 13.7" stroke="#5083ee" stroke-width="1.6" stroke-linecap="round"/></svg>
<div style="position:absolute;left:310.20px;top:783px;height:30px;line-height:30px;font-family:'Liberation Sans',sans-serif;font-size:21px;color:#dfe1e5;white-space:pre;letter-spacing:0.182px;">MainActivity</div>
<svg style="position:absolute;left:201.29999999999998px;top:826.5px" width="7.6" height="12.4" viewBox="-1 -1 7.6 12.4" fill="none" ><path d="M0 0 L5.6 5.2 L0 10.4" stroke="#ced0d6" stroke-width="1.6" stroke-linecap="round" stroke-linejoin="round"/></svg>
<svg style="position:absolute;left:226.0px;top:823.6px" width="24.2" height="23.2" viewBox="0 0 25 24" fill="none" ><path d="M1 3.2 Q1 1 3.2 1 H7.3 Q8.2 1 8.8 1.6 L10.6 3.6 Q11 4 11.6 4 H18.8 Q21 4 21 6.2 V15.8 Q21 18 18.8 18 H3.2 Q1 18 1 15.8 Z" fill="#43454a" stroke="#ced0d6" stroke-width="1.5" stroke-linejoin="round"/></svg>
<div style="position:absolute;left:256.20px;top:819px;height:30px;line-height:30px;font-family:'Liberation Sans',sans-serif;font-size:21px;color:#dfe1e5;white-space:pre;letter-spacing:-0.433px;">jniLibs</div>
<svg style="position:absolute;left:201.29999999999998px;top:862.5px" width="7.6" height="12.4" viewBox="-1 -1 7.6 12.4" fill="none" ><path d="M0 0 L5.6 5.2 L0 10.4" stroke="#ced0d6" stroke-width="1.6" stroke-linecap="round" stroke-linejoin="round"/></svg>
<svg style="position:absolute;left:226.0px;top:859.6px" width="24.2" height="23.2" viewBox="0 0 25 24" fill="none" ><path d="M1 3.2 Q1 1 3.2 1 H7.3 Q8.2 1 8.8 1.6 L10.6 3.6 Q11 4 11.6 4 H18.8 Q21 4 21 6.2 V15.8 Q21 18 18.8 18 H3.2 Q1 18 1 15.8 Z" fill="#43454a" stroke="#ced0d6" stroke-width="1.5" stroke-linejoin="round"/><rect x="11" y="10" width="13" height="13" fill="#2b2d30"/><path d="M13 13.2 H23 M13 16.2 H23 M13 19.2 H23" stroke="#f2c55c" stroke-width="1.6"/></svg>
<div style="position:absolute;left:254.20px;top:855px;height:30px;line-height:30px;font-family:'Liberation Sans',sans-serif;font-size:21px;color:#dfe1e5;white-space:pre;letter-spacing:-0.800px;">res</div>
<div style="position:absolute;left:80px;top:886px;width:454px;height:36px;border-radius:7px;background:#2e436e"></div>
<svg style="position:absolute;left:227.5px;top:895.2px" width="18.4" height="18.4" viewBox="0 0 19 19" fill="none" ><rect x="1" y="1" width="17" height="17" rx="3.2" fill="#25352b" stroke="#3ddc84" stroke-width="1.9"/><path d="M5.4 13.5 V5.8 L9.5 12.4 L13.6 5.8 V13.5" stroke="#3ddc84" stroke-width="1.6" stroke-linejoin="round" stroke-linecap="round"/></svg>
<div style="position:absolute;left:255.20px;top:891px;height:30px;line-height:30px;font-family:'Liberation Sans',sans-serif;font-size:21px;color:#dfe1e5;white-space:pre;letter-spacing:-0.100px;">AndroidManifest.xml</div>
<svg style="position:absolute;left:172.79999999999998px;top:934.5px" width="7.6" height="12.4" viewBox="-1 -1 7.6 12.4" fill="none" ><path d="M0 0 L5.6 5.2 L0 10.4" stroke="#ced0d6" stroke-width="1.6" stroke-linecap="round" stroke-linejoin="round"/></svg>
<svg style="position:absolute;left:197.5px;top:931.6px" width="24.2" height="23.2" viewBox="0 0 25 24" fill="none" ><path d="M1 3.2 Q1 1 3.2 1 H7.3 Q8.2 1 8.8 1.6 L10.6 3.6 Q11 4 11.6 4 H18.8 Q21 4 21 6.2 V15.8 Q21 18 18.8 18 H3.2 Q1 18 1 15.8 Z" fill="#43454a" stroke="#ced0d6" stroke-width="1.5" stroke-linejoin="round"/><rect x="11.4" y="9.8" width="13" height="13" fill="#2b2d30"/><rect x="13.4" y="11.8" width="9" height="9" rx="2.2" fill="#25324d" stroke="#5083ee" stroke-width="1.5"/></svg>
<div style="position:absolute;left:226.70px;top:927px;height:30px;line-height:30px;font-family:'Liberation Sans',sans-serif;font-size:21px;color:#dfe1e5;white-space:pre;letter-spacing:-0.500px;">test</div>
<div style="position:absolute;left:266.40px;top:927px;height:30px;line-height:30px;font-family:'Liberation Sans',sans-serif;font-size:21px;color:#dfe1e5;white-space:pre;-webkit-text-stroke:0.65px currentColor;letter-spacing:1.556px;">[unitTest]</div>
<svg style="position:absolute;left:169.0px;top:966px" width="22" height="22" viewBox="0 0 22 22" fill="none" ><circle cx="11" cy="11" r="9.6" stroke="#ced0d6" stroke-width="1.5"/><path d="M4.3 17.7 L17.7 4.3" stroke="#ced0d6" stroke-width="1.5"/></svg>
<div style="position:absolute;left:196.20px;top:963px;height:30px;line-height:30px;font-family:'Liberation Sans',sans-serif;font-size:21px;color:#dfe1e5;white-space:pre;letter-spacing:0.178px;">.gitignore</div>
<svg style="position:absolute;left:168.1px;top:1001.6px" width="26" height="24" viewBox="0 0 26 24" fill="none" ><g transform="scale(0.764)"><path d="M0.9 22.8 V17 C0.9 11.5 4 7.7 8 6.5 C12 4.2 17 4.8 20 6.2 C23 7.6 25 9.2 28 9 C30.5 8.6 30.6 4.5 29 2.6 C27.5 0.9 25 1.6 23.5 2.8" stroke="#ced0d6" stroke-width="2.0" stroke-linecap="round" stroke-linejoin="round"/><path d="M29.6 7 C30 10 28.5 13.4 23.5 14.8" stroke="#ced0d6" stroke-width="2.0" stroke-linecap="round" stroke-linejoin="round"/><path d="M6 7.6 C5.6 10 6.2 12.6 8.5 14.2 C11 15.6 13.5 13.5 14.7 12.1" stroke="#ced0d6" stroke-width="2.0" stroke-linecap="round" stroke-linejoin="round"/><circle cx="19.1" cy="11.2" r="1.15" fill="#ced0d6"/><path d="M0.9 22.8 H4.9 C5.2 21 5.6 20.2 6.8 19.4 C8.5 18.6 9.8 20 11.5 21.9 C13 20.5 13.8 20 14.7 19.7" stroke="#ced0d6" stroke-width="2.0" stroke-linecap="round" stroke-linejoin="round"/></g><rect x="11.2" y="10.2" width="14" height="13.5" fill="#2b2d30"/><path d="M14.4 13.5 H23.2 L19.2 17.85 L23.2 22.2 H14.4 Z" fill="#2d2533" stroke="#c585f5" stroke-width="1.7" stroke-linejoin="round"/></svg>
<div style="position:absolute;left:197.20px;top:999px;height:30px;line-height:30px;font-family:'Liberation Sans',sans-serif;font-size:21px;color:#dfe1e5;white-space:pre;letter-spacing:-0.040px;">build.gradle.kts</div>
<svg style="position:absolute;left:170.7px;top:1041.1px" width="18" height="16" viewBox="0 0 18 16" fill="none" ><path d="M0 1 H18 M0 5.5 H12 M0 10 H18 M0 14.6 H12" stroke="#ced0d6" stroke-width="1.8"/></svg>
<div style="position:absolute;left:197.20px;top:1035px;height:30px;line-height:30px;font-family:'Liberation Sans',sans-serif;font-size:21px;color:#dfe1e5;white-space:pre;letter-spacing:0.012px;">proguard-rules.pro</div>
<svg style="position:absolute;left:115.8px;top:1078.5px" width="7.6" height="12.4" viewBox="-1 -1 7.6 12.4" fill="none" ><path d="M0 0 L5.6 5.2 L0 10.4" stroke="#ced0d6" stroke-width="1.6" stroke-linecap="round" stroke-linejoin="round"/></svg>
<svg style="position:absolute;left:140.5px;top:1075.6px" width="24.2" height="23.2" viewBox="0 0 25 24" fill="none" ><path d="M1 3.2 Q1 1 3.2 1 H7.3 Q8.2 1 8.8 1.6 L10.6 3.6 Q11 4 11.6 4 H18.8 Q21 4 21 6.2 V15.8 Q21 18 18.8 18 H3.2 Q1 18 1 15.8 Z" fill="#43454a" stroke="#ced0d6" stroke-width="1.5" stroke-linejoin="round"/></svg>
<div style="position:absolute;left:168.70px;top:1071px;height:30px;line-height:30px;font-family:'Liberation Sans',sans-serif;font-size:21px;color:#dfe1e5;white-space:pre;letter-spacing:-0.220px;">gradle</div>
<svg style="position:absolute;left:140.5px;top:1110px" width="22" height="22" viewBox="0 0 22 22" fill="none" ><circle cx="11" cy="11" r="9.6" stroke="#ced0d6" stroke-width="1.5"/><path d="M4.3 17.7 L17.7 4.3" stroke="#ced0d6" stroke-width="1.5"/></svg>
<div style="position:absolute;left:167.70px;top:1107px;height:30px;line-height:30px;font-family:'Liberation Sans',sans-serif;font-size:21px;color:#dfe1e5;white-space:pre;letter-spacing:0.122px;">.gitignore</div>
<svg style="position:absolute;left:139.6px;top:1145.6px" width="26" height="24" viewBox="0 0 26 24" fill="none" ><g transform="scale(0.764)"><path d="M0.9 22.8 V17 C0.9 11.5 4 7.7 8 6.5 C12 4.2 17 4.8 20 6.2 C23 7.6 25 9.2 28 9 C30.5 8.6 30.6 4.5 29 2.6 C27.5 0.9 25 1.6 23.5 2.8" stroke="#ced0d6" stroke-width="2.0" stroke-linecap="round" stroke-linejoin="round"/><path d="M29.6 7 C30 10 28.5 13.4 23.5 14.8" stroke="#ced0d6" stroke-width="2.0" stroke-linecap="round" stroke-linejoin="round"/><path d="M6 7.6 C5.6 10 6.2 12.6 8.5 14.2 C11 15.6 13.5 13.5 14.7 12.1" stroke="#ced0d6" stroke-width="2.0" stroke-linecap="round" stroke-linejoin="round"/><circle cx="19.1" cy="11.2" r="1.15" fill="#ced0d6"/><path d="M0.9 22.8 H4.9 C5.2 21 5.6 20.2 6.8 19.4 C8.5 18.6 9.8 20 11.5 21.9 C13 20.5 13.8 20 14.7 19.7" stroke="#ced0d6" stroke-width="2.0" stroke-linecap="round" stroke-linejoin="round"/></g><rect x="11.2" y="10.2" width="14" height="13.5" fill="#2b2d30"/><path d="M14.4 13.5 H23.2 L19.2 17.85 L23.2 22.2 H14.4 Z" fill="#2d2533" stroke="#c585f5" stroke-width="1.7" stroke-linejoin="round"/></svg>
<div style="position:absolute;left:168.70px;top:1143px;height:30px;line-height:30px;font-family:'Liberation Sans',sans-serif;font-size:21px;color:#dfe1e5;white-space:pre;letter-spacing:-0.073px;">build.gradle.kts</div>
<svg style="position:absolute;left:140.7px;top:1181.4px" width="22" height="22" viewBox="0 0 22 22" fill="none" ><path d="M11.00 1.00 L11.65 1.02 L12.31 1.09 L12.90 1.43 L13.19 2.84 L13.30 4.23 L13.64 4.63 L14.05 4.81 L14.45 5.02 L14.83 5.26 L15.20 5.53 L15.71 5.63 L16.98 5.02 L18.33 4.57 L18.93 4.91 L19.31 5.44 L19.66 6.00 L19.97 6.58 L20.24 7.17 L20.24 7.86 L19.16 8.81 L18.01 9.61 L17.84 10.10 L17.89 10.55 L17.90 11.00 L17.89 11.45 L17.84 11.90 L18.01 12.39 L19.16 13.19 L20.24 14.14 L20.24 14.83 L19.97 15.42 L19.66 16.00 L19.31 16.56 L18.93 17.09 L18.33 17.43 L16.98 16.98 L15.71 16.37 L15.20 16.47 L14.83 16.74 L14.45 16.98 L14.05 17.19 L13.64 17.37 L13.30 17.77 L13.19 19.16 L12.90 20.57 L12.31 20.91 L11.65 20.98 L11.00 21.00 L10.35 20.98 L9.69 20.91 L9.10 20.57 L8.81 19.16 L8.70 17.77 L8.36 17.37 L7.95 17.19 L7.55 16.98 L7.17 16.74 L6.80 16.47 L6.29 16.37 L5.02 16.98 L3.67 17.43 L3.07 17.09 L2.69 16.56 L2.34 16.00 L2.03 15.42 L1.76 14.83 L1.76 14.14 L2.84 13.19 L3.99 12.39 L4.16 11.90 L4.11 11.45 L4.10 11.00 L4.11 10.55 L4.16 10.10 L3.99 9.61 L2.84 8.81 L1.76 7.86 L1.76 7.17 L2.03 6.58 L2.34 6.00 L2.69 5.44 L3.07 4.91 L3.67 4.57 L5.02 5.02 L6.29 5.63 L6.80 5.53 L7.17 5.26 L7.55 5.02 L7.95 4.81 L8.36 4.63 L8.70 4.23 L8.81 2.84 L9.10 1.43 L9.69 1.09 L10.35 1.02 Z" stroke="#ced0d6" stroke-width="1.5" stroke-linejoin="round"/><circle cx="11" cy="11" r="3.3" stroke="#ced0d6" stroke-width="1.5"/></svg>
<div style="position:absolute;left:168.70px;top:1179px;height:30px;line-height:30px;font-family:'Liberation Sans',sans-serif;font-size:21px;color:#dfe1e5;white-space:pre;letter-spacing:-0.056px;">gradle.properties</div>
<svg style="position:absolute;left:142.5px;top:1220px" width="19" height="16" viewBox="0 0 19 16" fill="none" ><rect x="0" y="0" width="19" height="16" fill="#9aa7b0" opacity="0.85"/><path d="M5.5 4 L10 8 L5.5 12" stroke="#2b2d30" stroke-width="2.2"/></svg>
<div style="position:absolute;left:168.70px;top:1215px;height:30px;line-height:30px;font-family:'Liberation Sans',sans-serif;font-size:21px;color:#dfe1e5;white-space:pre;letter-spacing:-0.283px;">gradlew</div>
<svg style="position:absolute;left:142.2px;top:1257.1px" width="18" height="16" viewBox="0 0 18 16" fill="none" ><path d="M0 1 H18 M0 5.5 H12 M0 10 H18 M0 14.6 H12" stroke="#ced0d6" stroke-width="1.8"/></svg>
<div style="position:absolute;left:168.70px;top:1251px;height:30px;line-height:30px;font-family:'Liberation Sans',sans-serif;font-size:21px;color:#dfe1e5;white-space:pre;letter-spacing:-0.010px;">gradlew.bat</div>
<svg style="position:absolute;left:140.7px;top:1289.4px" width="22" height="22" viewBox="0 0 22 22" fill="none" ><path d="M11.00 1.00 L11.65 1.02 L12.31 1.09 L12.90 1.43 L13.19 2.84 L13.30 4.23 L13.64 4.63 L14.05 4.81 L14.45 5.02 L14.83 5.26 L15.20 5.53 L15.71 5.63 L16.98 5.02 L18.33 4.57 L18.93 4.91 L19.31 5.44 L19.66 6.00 L19.97 6.58 L20.24 7.17 L20.24 7.86 L19.16 8.81 L18.01 9.61 L17.84 10.10 L17.89 10.55 L17.90 11.00 L17.89 11.45 L17.84 11.90 L18.01 12.39 L19.16 13.19 L20.24 14.14 L20.24 14.83 L19.97 15.42 L19.66 16.00 L19.31 16.56 L18.93 17.09 L18.33 17.43 L16.98 16.98 L15.71 16.37 L15.20 16.47 L14.83 16.74 L14.45 16.98 L14.05 17.19 L13.64 17.37 L13.30 17.77 L13.19 19.16 L12.90 20.57 L12.31 20.91 L11.65 20.98 L11.00 21.00 L10.35 20.98 L9.69 20.91 L9.10 20.57 L8.81 19.16 L8.70 17.77 L8.36 17.37 L7.95 17.19 L7.55 16.98 L7.17 16.74 L6.80 16.47 L6.29 16.37 L5.02 16.98 L3.67 17.43 L3.07 17.09 L2.69 16.56 L2.34 16.00 L2.03 15.42 L1.76 14.83 L1.76 14.14 L2.84 13.19 L3.99 12.39 L4.16 11.90 L4.11 11.45 L4.10 11.00 L4.11 10.55 L4.16 10.10 L3.99 9.61 L2.84 8.81 L1.76 7.86 L1.76 7.17 L2.03 6.58 L2.34 6.00 L2.69 5.44 L3.07 4.91 L3.67 4.57 L5.02 5.02 L6.29 5.63 L6.80 5.53 L7.17 5.26 L7.55 5.02 L7.95 4.81 L8.36 4.63 L8.70 4.23 L8.81 2.84 L9.10 1.43 L9.69 1.09 L10.35 1.02 Z" stroke="#ced0d6" stroke-width="1.5" stroke-linejoin="round"/><circle cx="11" cy="11" r="3.3" stroke="#ced0d6" stroke-width="1.5"/></svg>
<div style="position:absolute;left:168.70px;top:1287px;height:30px;line-height:30px;font-family:'Liberation Sans',sans-serif;font-size:21px;color:#dfe1e5;white-space:pre;letter-spacing:0.020px;">local.properties</div>
<svg style="position:absolute;left:139.6px;top:1325.6px" width="26" height="24" viewBox="0 0 26 24" fill="none" ><g transform="scale(0.764)"><path d="M0.9 22.8 V17 C0.9 11.5 4 7.7 8 6.5 C12 4.2 17 4.8 20 6.2 C23 7.6 25 9.2 28 9 C30.5 8.6 30.6 4.5 29 2.6 C27.5 0.9 25 1.6 23.5 2.8" stroke="#ced0d6" stroke-width="2.0" stroke-linecap="round" stroke-linejoin="round"/><path d="M29.6 7 C30 10 28.5 13.4 23.5 14.8" stroke="#ced0d6" stroke-width="2.0" stroke-linecap="round" stroke-linejoin="round"/><path d="M6 7.6 C5.6 10 6.2 12.6 8.5 14.2 C11 15.6 13.5 13.5 14.7 12.1" stroke="#ced0d6" stroke-width="2.0" stroke-linecap="round" stroke-linejoin="round"/><circle cx="19.1" cy="11.2" r="1.15" fill="#ced0d6"/><path d="M0.9 22.8 H4.9 C5.2 21 5.6 20.2 6.8 19.4 C8.5 18.6 9.8 20 11.5 21.9 C13 20.5 13.8 20 14.7 19.7" stroke="#ced0d6" stroke-width="2.0" stroke-linecap="round" stroke-linejoin="round"/></g><rect x="11.2" y="10.2" width="14" height="13.5" fill="#2b2d30"/><path d="M14.4 13.5 H23.2 L19.2 17.85 L23.2 22.2 H14.4 Z" fill="#2d2533" stroke="#c585f5" stroke-width="1.7" stroke-linejoin="round"/></svg>
<div style="position:absolute;left:168.70px;top:1323px;height:30px;line-height:30px;font-family:'Liberation Sans',sans-serif;font-size:21px;color:#dfe1e5;white-space:pre;letter-spacing:-0.061px;">settings.gradle.kts</div>
<svg style="position:absolute;left:87.3px;top:1366.5px" width="7.6" height="12.4" viewBox="-1 -1 7.6 12.4" fill="none" ><path d="M0 0 L5.6 5.2 L0 10.4" stroke="#ced0d6" stroke-width="1.6" stroke-linecap="round" stroke-linejoin="round"/></svg>
<svg style="position:absolute;left:112.5px;top:1362px" width="22" height="19" viewBox="0 0 22 19" fill="none" ><rect x="1" y="6" width="6.5" height="12" rx="1" stroke="#ced0d6" stroke-width="1.5"/><rect x="7.5" y="1" width="6.5" height="17" rx="1" stroke="#ced0d6" stroke-width="1.5"/><rect x="14" y="8.5" width="6" height="9.5" rx="1" stroke="#ced0d6" stroke-width="1.5"/></svg>
<div style="position:absolute;left:141.20px;top:1359px;height:30px;line-height:30px;font-family:'Liberation Sans','Noto Sans CJK SC',sans-serif;font-size:19px;color:#dfe1e5;white-space:pre;letter-spacing:-0.600px;">外部库</div>
<svg style="position:absolute;left:112.5px;top:1395.5px" width="23" height="23" viewBox="0 0 23 23" fill="none" ><path d="M1 6 H11 M1 11 H16 M1 16 H19 M1 21 H12" stroke="#ced0d6" stroke-width="1.6"/><circle cx="17" cy="5.5" r="5.5" fill="#5083ee"/><path d="M17 2.5 V5.8 L19 7.4" stroke="#2b2d30" stroke-width="1.3" stroke-linecap="round"/></svg>
<div style="position:absolute;left:140.20px;top:1395px;height:30px;line-height:30px;font-family:'Liberation Sans','Noto Sans CJK SC',sans-serif;font-size:19px;color:#dfe1e5;white-space:pre;letter-spacing:0.114px;">临时文件和控制台</div>
<svg style="position:absolute;left:574.9px;top:83.8px" width="18.4" height="18.4" viewBox="0 0 19 19" fill="none" ><rect x="1" y="1" width="17" height="17" rx="3.2" fill="#25352b" stroke="#3ddc84" stroke-width="1.9"/><path d="M5.4 13.5 V5.8 L9.5 12.4 L13.6 5.8 V13.5" stroke="#3ddc84" stroke-width="1.6" stroke-linejoin="round" stroke-linecap="round"/></svg>
<div style="position:absolute;left:602.60px;top:80px;height:30px;line-height:30px;font-family:'Liberation Sans',sans-serif;font-size:21px;color:#dfe1e5;white-space:pre;letter-spacing:-0.044px;">AndroidManifest.xml</div>
<svg style="position:absolute;left:807.2px;top:87.7px" width="11.6" height="11.6" viewBox="-1 -1 11.6 11.6" fill="none" ><path d="M0 0 L9.6 9.6 M9.6 0 L0 9.6" stroke="#868a91" stroke-width="1.5" stroke-linecap="round"/></svg>
<div style="position:absolute;left:554px;top:120px;width:283px;height:4.5px;border-radius:2.2px;background:#71747b"></div>
<svg style="position:absolute;left:854px;top:84px" width="24" height="19" viewBox="0 0 24 19" fill="none" ><path d="M8 4 L1 9.45 L8 14.8 M16.2 4 L23.2 9.45 L16.2 14.8 M14.2 1 L9.6 18" stroke="#c27a52" stroke-width="1.9" stroke-linecap="round" stroke-linejoin="round"/></svg>
<div style="position:absolute;left:883.40px;top:80px;height:30px;line-height:30px;font-family:'Liberation Sans',sans-serif;font-size:21px;color:#c3c6cc;white-space:pre;letter-spacing:0.000px;">activity_main.xml</div>
<svg style="position:absolute;left:1108.2px;top:82px" width="22" height="22" viewBox="0 0 22 22" fill="none" ><circle cx="11" cy="11" r="9.6" fill="#25324d" stroke="#5083ee" stroke-width="1.5"/><path d="M14.6 8.3 A4.6 4.6 0 1 0 14.6 13.7" stroke="#5083ee" stroke-width="1.6" stroke-linecap="round"/></svg>
<div style="position:absolute;left:1135.40px;top:80px;height:30px;line-height:30px;font-family:'Liberation Sans',sans-serif;font-size:21px;color:#c3c6cc;white-space:pre;letter-spacing:0.188px;">MainActivity.java</div>
<svg style="position:absolute;left:1358.8px;top:81.6px" width="22" height="22" viewBox="0 0 22 22" fill="none" ><path d="M11.00 1.00 L11.65 1.02 L12.31 1.09 L12.90 1.43 L13.19 2.84 L13.30 4.23 L13.64 4.63 L14.05 4.81 L14.45 5.02 L14.83 5.26 L15.20 5.53 L15.71 5.63 L16.98 5.02 L18.33 4.57 L18.93 4.91 L19.31 5.44 L19.66 6.00 L19.97 6.58 L20.24 7.17 L20.24 7.86 L19.16 8.81 L18.01 9.61 L17.84 10.10 L17.89 10.55 L17.90 11.00 L17.89 11.45 L17.84 11.90 L18.01 12.39 L19.16 13.19 L20.24 14.14 L20.24 14.83 L19.97 15.42 L19.66 16.00 L19.31 16.56 L18.93 17.09 L18.33 17.43 L16.98 16.98 L15.71 16.37 L15.20 16.47 L14.83 16.74 L14.45 16.98 L14.05 17.19 L13.64 17.37 L13.30 17.77 L13.19 19.16 L12.90 20.57 L12.31 20.91 L11.65 20.98 L11.00 21.00 L10.35 20.98 L9.69 20.91 L9.10 20.57 L8.81 19.16 L8.70 17.77 L8.36 17.37 L7.95 17.19 L7.55 16.98 L7.17 16.74 L6.80 16.47 L6.29 16.37 L5.02 16.98 L3.67 17.43 L3.07 17.09 L2.69 16.56 L2.34 16.00 L2.03 15.42 L1.76 14.83 L1.76 14.14 L2.84 13.19 L3.99 12.39 L4.16 11.90 L4.11 11.45 L4.10 11.00 L4.11 10.55 L4.16 10.10 L3.99 9.61 L2.84 8.81 L1.76 7.86 L1.76 7.17 L2.03 6.58 L2.34 6.00 L2.69 5.44 L3.07 4.91 L3.67 4.57 L5.02 5.02 L6.29 5.63 L6.80 5.53 L7.17 5.26 L7.55 5.02 L7.95 4.81 L8.36 4.63 L8.70 4.23 L8.81 2.84 L9.10 1.43 L9.69 1.09 L10.35 1.02 Z" stroke="#ced0d6" stroke-width="1.5" stroke-linejoin="round"/><circle cx="11" cy="11" r="3.3" stroke="#ced0d6" stroke-width="1.5"/></svg>
<div style="position:absolute;left:1387.20px;top:80px;height:30px;line-height:30px;font-family:'Liberation Sans',sans-serif;font-size:21px;color:#c3c6cc;white-space:pre;letter-spacing:0.025px;">gradle.properties</div>
<svg style="position:absolute;left:1607.5px;top:81.5px" width="26" height="24" viewBox="0 0 26 24" fill="none" ><g transform="scale(0.764)"><path d="M0.9 22.8 V17 C0.9 11.5 4 7.7 8 6.5 C12 4.2 17 4.8 20 6.2 C23 7.6 25 9.2 28 9 C30.5 8.6 30.6 4.5 29 2.6 C27.5 0.9 25 1.6 23.5 2.8" stroke="#ced0d6" stroke-width="2.0" stroke-linecap="round" stroke-linejoin="round"/><path d="M29.6 7 C30 10 28.5 13.4 23.5 14.8" stroke="#ced0d6" stroke-width="2.0" stroke-linecap="round" stroke-linejoin="round"/><path d="M6 7.6 C5.6 10 6.2 12.6 8.5 14.2 C11 15.6 13.5 13.5 14.7 12.1" stroke="#ced0d6" stroke-width="2.0" stroke-linecap="round" stroke-linejoin="round"/><circle cx="19.1" cy="11.2" r="1.15" fill="#ced0d6"/><path d="M0.9 22.8 H4.9 C5.2 21 5.6 20.2 6.8 19.4 C8.5 18.6 9.8 20 11.5 21.9 C13 20.5 13.8 20 14.7 19.7" stroke="#ced0d6" stroke-width="2.0" stroke-linecap="round" stroke-linejoin="round"/></g><rect x="11.2" y="10.2" width="14" height="13.5" fill="#1e1f22"/><path d="M14.4 13.5 H23.2 L19.2 17.85 L23.2 22.2 H14.4 Z" fill="#2d2533" stroke="#c585f5" stroke-width="1.7" stroke-linejoin="round"/></svg>
<div style="position:absolute;left:1637.80px;top:80px;height:30px;line-height:30px;font-family:'Liberation Sans',sans-serif;font-size:21px;color:#c3c6cc;white-space:pre;letter-spacing:0.078px;">build.gradle.kts (Task5)</div>
<svg style="position:absolute;left:1919px;top:81.5px" width="26" height="24" viewBox="0 0 26 24" fill="none" ><g transform="scale(0.764)"><path d="M0.9 22.8 V17 C0.9 11.5 4 7.7 8 6.5 C12 4.2 17 4.8 20 6.2 C23 7.6 25 9.2 28 9 C30.5 8.6 30.6 4.5 29 2.6 C27.5 0.9 25 1.6 23.5 2.8" stroke="#ced0d6" stroke-width="2.0" stroke-linecap="round" stroke-linejoin="round"/><path d="M29.6 7 C30 10 28.5 13.4 23.5 14.8" stroke="#ced0d6" stroke-width="2.0" stroke-linecap="round" stroke-linejoin="round"/><path d="M6 7.6 C5.6 10 6.2 12.6 8.5 14.2 C11 15.6 13.5 13.5 14.7 12.1" stroke="#ced0d6" stroke-width="2.0" stroke-linecap="round" stroke-linejoin="round"/><circle cx="19.1" cy="11.2" r="1.15" fill="#ced0d6"/><path d="M0.9 22.8 H4.9 C5.2 21 5.6 20.2 6.8 19.4 C8.5 18.6 9.8 20 11.5 21.9 C13 20.5 13.8 20 14.7 19.7" stroke="#ced0d6" stroke-width="2.0" stroke-linecap="round" stroke-linejoin="round"/></g><rect x="11.2" y="10.2" width="14" height="13.5" fill="#1e1f22"/><path d="M14.4 13.5 H23.2 L19.2 17.85 L23.2 22.2 H14.4 Z" fill="#2d2533" stroke="#c585f5" stroke-width="1.7" stroke-linejoin="round"/></svg>
<div style="position:absolute;left:1948.40px;top:80px;height:30px;line-height:30px;font-family:'Liberation Sans',sans-serif;font-size:21px;color:#c3c6cc;white-space:pre;letter-spacing:-0.036px;">build.gradle.kts (:app)</div>
<svg style="position:absolute;left:2468.2px;top:82.5px" width="6" height="21.8" viewBox="-3 -10.9 6 21.8" fill="none" ><circle cx="0" cy="-7.9" r="1.7" fill="#ced0d6"/><circle cx="0" cy="0" r="1.7" fill="#ced0d6"/><circle cx="0" cy="7.9" r="1.7" fill="#ced0d6"/></svg>
<div style="position:absolute;left:552px;top:123px;width:1947px;height:2px;background:#36383c;"></div>
<div style="position:absolute;left:552px;top:1216px;width:1947px;height:33px;background:#26282e;"></div>
<div style="position:absolute;left:754px;top:358px;width:1745px;height:33px;background:#214283;"></div>
<div style="position:absolute;left:658px;top:391px;width:1841px;height:825px;background:#214283;"></div>
<div style="position:absolute;left:654px;top:125px;width:2px;height:1322px;background:#313438;"></div>
<div style="position:absolute;left:1858px;top:125px;width:2px;height:1322px;background:#393b40;"></div>
<div style="position:absolute;left:703px;top:125px;width:2px;height:233px;background:#313438;"></div>
<div style="position:absolute;left:703px;top:358px;width:2px;height:264px;background:#313438;"></div>
<div style="position:absolute;left:703px;top:391px;width:2px;height:231px;background:#35373c;"></div>
<div style="position:absolute;left:751px;top:125px;width:2px;height:167px;background:#313438;"></div>
<div style="position:absolute;left:751px;top:391px;width:2px;height:66px;background:#35373c;"></div>
<div style="position:absolute;left:751px;top:523px;width:2px;height:99px;background:#35373c;"></div>
<div style="position:absolute;left:799px;top:160px;width:2px;height:99px;background:#313438;"></div>
<div class="ln" style="top:127px;color:#4b5059">20</div>
<div class="ln" style="top:160px;color:#4b5059">21</div>
<div class="ln" style="top:193px;color:#4b5059">22</div>
<div class="ln" style="top:226px;color:#4b5059">23</div>
<div class="ln" style="top:259px;color:#4b5059">24</div>
<div class="ln" style="top:292px;color:#4b5059">25</div>
<div class="ln" style="top:325px;color:#4b5059">26</div>
<div class="ln" style="top:358px;color:#4b5059">27</div>
<div class="ln" style="top:391px;color:#4b5059">28</div>
<div class="ln" style="top:424px;color:#4b5059">29</div>
<div class="ln" style="top:457px;color:#4b5059">30</div>
<div class="ln" style="top:490px;color:#4b5059">31</div>
<div class="ln" style="top:523px;color:#4b5059">32</div>
<div class="ln" style="top:556px;color:#4b5059">33</div>
<div class="ln" style="top:589px;color:#4b5059">34</div>
<div class="ln" style="top:622px;color:#4b5059">35</div>
<div class="ln" style="top:655px;color:#4b5059">36</div>
<div class="ln" style="top:688px;color:#4b5059">37</div>
<div class="ln" style="top:721px;color:#4b5059">38</div>
<div class="ln" style="top:754px;color:#4b5059">39</div>
<div class="ln" style="top:787px;color:#4b5059">40</div>
<div class="ln" style="top:820px;color:#4b5059">41</div>
<div class="ln" style="top:853px;color:#4b5059">42</div>
<div class="ln" style="top:886px;color:#4b5059">43</div>
<div class="ln" style="top:919px;color:#4b5059">44</div>
<div class="ln" style="top:952px;color:#4b5059">45</div>
<div class="ln" style="top:985px;color:#4b5059">46</div>
<div class="ln" style="top:1018px;color:#4b5059">47</div>
<div class="ln" style="top:1051px;color:#4b5059">48</div>
<div class="ln" style="top:1084px;color:#4b5059">49</div>
<div class="ln" style="top:1117px;color:#4b5059">50</div>
<div class="ln" style="top:1150px;color:#4b5059">51</div>
<div class="ln" style="top:1183px;color:#4b5059">52</div>
<div class="ln" style="top:1216px;color:#a1a3ab">53</div>
<div class="ln" style="top:1249px;color:#4b5059">54</div>
<div class="cl" style="top:127px"><span class="t" style="width:144px">            </span><span class="t" style="width:180px;color:#d5b778">&lt;intent-filter&gt;</span></div>
<div class="cl" style="top:160px"><span class="t" style="width:192px">                </span><span class="t" style="width:84px;color:#d5b778">&lt;action</span><span class="t" style="width:12px"> </span><span class="t" style="width:84px;color:#c77dbb">android</span><span class="t" style="width:60px;color:#bcbec4">:name</span><span class="t" style="width:348px;color:#6aab73">=&quot;android.intent.action.MAIN&quot;</span><span class="t" style="width:36px;color:#d5b778"> /&gt;</span></div>
<div class="cl" style="top:226px"><span class="t" style="width:192px">                </span><span class="t" style="width:108px;color:#d5b778">&lt;category</span><span class="t" style="width:12px"> </span><span class="t" style="width:84px;color:#c77dbb">android</span><span class="t" style="width:60px;color:#bcbec4">:name</span><span class="t" style="width:420px;color:#6aab73">=&quot;android.intent.category.LAUNCHER&quot;</span><span class="t" style="width:36px;color:#d5b778"> /&gt;</span></div>
<div class="cl" style="top:259px"><span class="t" style="width:144px">            </span><span class="t" style="width:192px;color:#d5b778">&lt;/intent-filter&gt;</span></div>
<div class="cl" style="top:292px"><span class="t" style="width:96px">        </span><span class="t" style="width:132px;color:#d5b778">&lt;/activity&gt;</span></div>
<div class="cl" style="top:358px"><span class="t" style="width:96px">        </span><span class="t" style="width:96px;color:#d5b778">&lt;service</span><span class="t" style="width:12px"> </span><span class="t" style="width:84px;color:#c77dbb">android</span><span class="t" style="width:60px;color:#bcbec4">:name</span><span class="t" style="width:276px;color:#6aab73">=&quot;com.baidu.location.f&quot;</span></div>
<div class="cl" style="top:391px"><span class="t" style="width:144px">            </span><span class="t" style="width:84px;color:#c77dbb">android</span><span class="t" style="width:96px;color:#bcbec4">:enabled</span><span class="t" style="width:84px;color:#6aab73">=&quot;true&quot;</span></div>
<div class="cl" style="top:424px"><span class="t" style="width:144px">            </span><span class="t" style="width:84px;color:#c77dbb">android</span><span class="t" style="width:96px;color:#bcbec4">:process</span><span class="t" style="width:120px;color:#6aab73">=&quot;:remote&quot;</span><span class="t" style="width:24px;color:#d5b778">/&gt;</span></div>
<div class="cl" style="top:490px"><span class="t" style="width:96px">        </span><span class="t" style="width:120px;color:#d5b778">&lt;meta-data</span></div>
<div class="cl" style="top:523px"><span class="t" style="width:144px">            </span><span class="t" style="width:84px;color:#c77dbb">android</span><span class="t" style="width:60px;color:#bcbec4">:name</span><span class="t" style="width:324px;color:#6aab73">=&quot;com.baidu.lbsapi.API_KEY&quot;</span></div>
<div class="cl" style="top:556px"><span class="t" style="width:144px">            </span><span class="t" style="width:84px;color:#c77dbb">android</span><span class="t" style="width:72px;color:#bcbec4">:value</span><span class="t" style="width:420px;color:#6aab73">=&quot;qk35W66tUiUV7LgLlrI07m002MCc07Eb&quot;</span></div>
<div class="cl" style="top:589px"><span class="t" style="width:144px">            </span><span class="t" style="width:24px;color:#d5b778">/&gt;</span></div>
<div class="cl" style="top:655px"><span class="t" style="width:48px">    </span><span class="t" style="width:168px;color:#d5b778">&lt;/application&gt;</span></div>
<div class="cl" style="top:721px"><span class="t" style="width:48px">    </span><span class="t" style="width:192px;color:#d5b778">&lt;uses-permission</span><span class="t" style="width:12px"> </span><span class="t" style="width:84px;color:#c77dbb">android</span><span class="t" style="width:60px;color:#bcbec4">:name</span><span class="t" style="width:528px;color:#6aab73">=&quot;android.permission.ACCESS_COARSE_LOCATION&quot;</span><span class="t" style="width:24px;color:#d5b778">/&gt;</span></div>
<div class="cl" style="top:754px"><span class="t" style="width:48px">    </span><span class="t" style="width:60px;color:#7a7e85">&lt;!-- </span><span class="t k" style="width:152px">这个权限用于访问</span><span class="t" style="width:36px;color:#7a7e85">GPS</span><span class="t k" style="width:38px">定位</span><span class="t" style="width:36px;color:#7a7e85">--&gt;</span></div>
<div class="cl" style="top:787px"><span class="t" style="width:48px">    </span><span class="t" style="width:192px;color:#d5b778">&lt;uses-permission</span><span class="t" style="width:12px"> </span><span class="t" style="width:84px;color:#c77dbb">android</span><span class="t" style="width:60px;color:#bcbec4">:name</span><span class="t" style="width:504px;color:#6aab73">=&quot;android.permission.ACCESS_FINE_LOCATION&quot;</span><span class="t" style="width:24px;color:#d5b778">/&gt;</span></div>
<div class="cl" style="top:820px"><span class="t" style="width:48px">    </span><span class="t" style="width:60px;color:#7a7e85">&lt;!-- </span><span class="t k" style="width:76px">用于访问</span><span class="t" style="width:48px;color:#7a7e85">wifi</span><span class="t k" style="width:95px">网络信息，</span><span class="t" style="width:48px;color:#7a7e85">wifi</span><span class="t k" style="width:209px">信息会用于进行网络定位</span><span class="t" style="width:36px;color:#7a7e85">--&gt;</span></div>
<div class="cl" style="top:853px"><span class="t" style="width:48px">    </span><span class="t" style="width:192px;color:#d5b778">&lt;uses-permission</span><span class="t" style="width:12px"> </span><span class="t" style="width:84px;color:#c77dbb">android</span><span class="t" style="width:60px;color:#bcbec4">:name</span><span class="t" style="width:468px;color:#6aab73">=&quot;android.permission.ACCESS_WIFI_STATE&quot;</span><span class="t" style="width:24px;color:#d5b778">/&gt;</span></div>
<div class="cl" style="top:886px"><span class="t" style="width:48px">    </span><span class="t" style="width:60px;color:#7a7e85">&lt;!-- </span><span class="t k" style="width:152px">这个权限用于获取</span><span class="t" style="width:48px;color:#7a7e85">wifi</span><span class="t k" style="width:114px">的获取权限，</span><span class="t" style="width:48px;color:#7a7e85">wifi</span><span class="t k" style="width:209px">信息会用来进行网络定位</span><span class="t" style="width:36px;color:#7a7e85">--&gt;</span></div>
<div class="cl" style="top:919px"><span class="t" style="width:48px">    </span><span class="t" style="width:192px;color:#d5b778">&lt;uses-permission</span><span class="t" style="width:12px"> </span><span class="t" style="width:84px;color:#c77dbb">android</span><span class="t" style="width:60px;color:#bcbec4">:name</span><span class="t" style="width:468px;color:#6aab73">=&quot;android.permission.CHANGE_WIFI_STATE&quot;</span><span class="t" style="width:24px;color:#d5b778">/&gt;</span></div>
<div class="cl" style="top:952px"><span class="t" style="width:48px">    </span><span class="t" style="width:60px;color:#7a7e85">&lt;!-- </span><span class="t k" style="width:247px">访问网络，网络定位需要上网</span><span class="t" style="width:36px;color:#7a7e85">--&gt;</span></div>
<div class="cl" style="top:985px"><span class="t" style="width:48px">    </span><span class="t" style="width:192px;color:#d5b778">&lt;uses-permission</span><span class="t" style="width:12px"> </span><span class="t" style="width:84px;color:#c77dbb">android</span><span class="t" style="width:60px;color:#bcbec4">:name</span><span class="t" style="width:360px;color:#6aab73">=&quot;android.permission.INTERNET&quot;</span><span class="t" style="width:24px;color:#d5b778">/&gt;</span></div>
<div class="cl" style="top:1018px"><span class="t" style="width:48px">    </span><span class="t" style="width:60px;color:#7a7e85">&lt;!-- </span><span class="t k" style="width:570px">访问网络，进行地图相关业务数据请求，包括地图数据，路线规划，</span><span class="t" style="width:36px;color:#7a7e85">POI</span><span class="t k" style="width:57px">检索等</span><span class="t" style="width:48px;color:#7a7e85"> --&gt;</span></div>
<div class="cl" style="top:1051px"><span class="t" style="width:48px">    </span><span class="t" style="width:192px;color:#d5b778">&lt;uses-permission</span><span class="t" style="width:12px"> </span><span class="t" style="width:84px;color:#c77dbb">android</span><span class="t" style="width:60px;color:#bcbec4">:name</span><span class="t" style="width:504px;color:#6aab73">=&quot;android.permission.ACCESS_NETWORK_STATE&quot;</span><span class="t" style="width:36px;color:#d5b778"> /&gt;</span></div>
<div class="cl" style="top:1084px"><span class="t" style="width:48px">    </span><span class="t" style="width:60px;color:#7a7e85">&lt;!-- </span><span class="t k" style="width:285px">读取外置存储。如果开发者使用了</span><span class="t" style="width:24px;color:#7a7e85">so</span><span class="t k" style="width:171px">动态加载功能并且把</span><span class="t" style="width:24px;color:#7a7e85">so</span><span class="t k" style="width:494px">文件放在了外置存储区域，则需要申请该权限，否则不需要</span><span class="t" style="width:48px;color:#7a7e85"> --&gt;</span></div>
<div class="cl" style="top:1117px"><span class="t" style="width:48px">    </span><span class="t" style="width:192px;color:#d5b778">&lt;uses-permission</span><span class="t" style="width:12px"> </span><span class="t" style="width:84px;color:#c77dbb">android</span><span class="t" style="width:60px;color:#bcbec4">:name</span><span class="t" style="width:516px;color:#6aab73">=&quot;android.permission.READ_EXTERNAL_STORAGE&quot;</span><span class="t" style="width:36px;color:#d5b778"> /&gt;</span></div>
<div class="cl" style="top:1150px"><span class="t" style="width:48px">    </span><span class="t" style="width:60px;color:#7a7e85">&lt;!-- </span><span class="t k" style="width:760px">写外置存储。如果开发者使用了离线地图，并且数据写在外置存储区域，则需要申请该权限</span><span class="t" style="width:48px;color:#7a7e85"> --&gt;</span></div>
<div class="cl" style="top:1183px"><span class="t" style="width:48px">    </span><span class="t" style="width:192px;color:#d5b778">&lt;uses-permission</span><span class="t" style="width:12px"> </span><span class="t" style="width:84px;color:#c77dbb">android</span><span class="t" style="width:60px;color:#bcbec4">:name</span><span class="t" style="width:528px;color:#6aab73">=&quot;android.permission.WRITE_EXTERNAL_STORAGE&quot;</span><span class="t" style="width:36px;color:#d5b778"> /&gt;</span></div>
<div class="cl" style="top:1249px"><span class="t" style="width:132px;color:#d5b778">&lt;/manifest&gt;</span></div>
<svg style="position:absolute;left:718px;top:748.6px" width="180" height="4" viewBox="0 0 180 4" fill="none"><polyline points="0,3.0 2,0.6 4,3.0 6,0.6 8,3.0 10,0.6 12,3.0 14,0.6 16,3.0 18,0.6 20,3.0 22,0.6 24,3.0 26,0.6 28,3.0 30,0.6 32,3.0 34,0.6 36,3.0 38,0.6 40,3.0 42,0.6 44,3.0 46,0.6 48,3.0 50,0.6 52,3.0 54,0.6 56,3.0 58,0.6 60,3.0 62,0.6 64,3.0 66,0.6 68,3.0 70,0.6 72,3.0 74,0.6 76,3.0 78,0.6 80,3.0 82,0.6 84,3.0 86,0.6 88,3.0 90,0.6 92,3.0 94,0.6 96,3.0 98,0.6 100,3.0 102,0.6 104,3.0 106,0.6 108,3.0 110,0.6 112,3.0 114,0.6 116,3.0 118,0.6 120,3.0 122,0.6 124,3.0 126,0.6 128,3.0 130,0.6 132,3.0 134,0.6 136,3.0 138,0.6 140,3.0 142,0.6 144,3.0 146,0.6 148,3.0 150,0.6 152,3.0 154,0.6 156,3.0 158,0.6 160,3.0 162,0.6 164,3.0 166,0.6 168,3.0 170,0.6 172,3.0 174,0.6 176,3.0 178,0.6 180,3.0" stroke="#c9a133" stroke-width="1.1"/></svg>
<svg style="position:absolute;left:1078px;top:1144.6px" width="480" height="4" viewBox="0 0 480 4" fill="none"><polyline points="0,3.0 2,0.6 4,3.0 6,0.6 8,3.0 10,0.6 12,3.0 14,0.6 16,3.0 18,0.6 20,3.0 22,0.6 24,3.0 26,0.6 28,3.0 30,0.6 32,3.0 34,0.6 36,3.0 38,0.6 40,3.0 42,0.6 44,3.0 46,0.6 48,3.0 50,0.6 52,3.0 54,0.6 56,3.0 58,0.6 60,3.0 62,0.6 64,3.0 66,0.6 68,3.0 70,0.6 72,3.0 74,0.6 76,3.0 78,0.6 80,3.0 82,0.6 84,3.0 86,0.6 88,3.0 90,0.6 92,3.0 94,0.6 96,3.0 98,0.6 100,3.0 102,0.6 104,3.0 106,0.6 108,3.0 110,0.6 112,3.0 114,0.6 116,3.0 118,0.6 120,3.0 122,0.6 124,3.0 126,0.6 128,3.0 130,0.6 132,3.0 134,0.6 136,3.0 138,0.6 140,3.0 142,0.6 144,3.0 146,0.6 148,3.0 150,0.6 152,3.0 154,0.6 156,3.0 158,0.6 160,3.0 162,0.6 164,3.0 166,0.6 168,3.0 170,0.6 172,3.0 174,0.6 176,3.0 178,0.6 180,3.0 182,0.6 184,3.0 186,0.6 188,3.0 190,0.6 192,3.0 194,0.6 196,3.0 198,0.6 200,3.0 202,0.6 204,3.0 206,0.6 208,3.0 210,0.6 212,3.0 214,0.6 216,3.0 218,0.6 220,3.0 222,0.6 224,3.0 226,0.6 228,3.0 230,0.6 232,3.0 234,0.6 236,3.0 238,0.6 240,3.0 242,0.6 244,3.0 246,0.6 248,3.0 250,0.6 252,3.0 254,0.6 256,3.0 258,0.6 260,3.0 262,0.6 264,3.0 266,0.6 268,3.0 270,0.6 272,3.0 274,0.6 276,3.0 278,0.6 280,3.0 282,0.6 284,3.0 286,0.6 288,3.0 290,0.6 292,3.0 294,0.6 296,3.0 298,0.6 300,3.0 302,0.6 304,3.0 306,0.6 308,3.0 310,0.6 312,3.0 314,0.6 316,3.0 318,0.6 320,3.0 322,0.6 324,3.0 326,0.6 328,3.0 330,0.6 332,3.0 334,0.6 336,3.0 338,0.6 340,3.0 342,0.6 344,3.0 346,0.6 348,3.0 350,0.6 352,3.0 354,0.6 356,3.0 358,0.6 360,3.0 362,0.6 364,3.0 366,0.6 368,3.0 370,0.6 372,3.0 374,0.6 376,3.0 378,0.6 380,3.0 382,0.6 384,3.0 386,0.6 388,3.0 390,0.6 392,3.0 394,0.6 396,3.0 398,0.6 400,3.0 402,0.6 404,3.0 406,0.6 408,3.0 410,0.6 412,3.0 414,0.6 416,3.0 418,0.6 420,3.0 422,0.6 424,3.0 426,0.6 428,3.0 430,0.6 432,3.0 434,0.6 436,3.0 438,0.6 440,3.0 442,0.6 444,3.0 446,0.6 448,3.0 450,0.6 452,3.0 454,0.6 456,3.0 458,0.6 460,3.0 462,0.6 464,3.0 466,0.6 468,3.0 470,0.6 472,3.0 474,0.6 476,3.0 478,0.6 480,3.0" stroke="#c9a133" stroke-width="1.1"/></svg>
<svg style="position:absolute;left:1078px;top:1210.6px" width="492" height="4" viewBox="0 0 492 4" fill="none"><polyline points="0,3.0 2,0.6 4,3.0 6,0.6 8,3.0 10,0.6 12,3.0 14,0.6 16,3.0 18,0.6 20,3.0 22,0.6 24,3.0 26,0.6 28,3.0 30,0.6 32,3.0 34,0.6 36,3.0 38,0.6 40,3.0 42,0.6 44,3.0 46,0.6 48,3.0 50,0.6 52,3.0 54,0.6 56,3.0 58,0.6 60,3.0 62,0.6 64,3.0 66,0.6 68,3.0 70,0.6 72,3.0 74,0.6 76,3.0 78,0.6 80,3.0 82,0.6 84,3.0 86,0.6 88,3.0 90,0.6 92,3.0 94,0.6 96,3.0 98,0.6 100,3.0 102,0.6 104,3.0 106,0.6 108,3.0 110,0.6 112,3.0 114,0.6 116,3.0 118,0.6 120,3.0 122,0.6 124,3.0 126,0.6 128,3.0 130,0.6 132,3.0 134,0.6 136,3.0 138,0.6 140,3.0 142,0.6 144,3.0 146,0.6 148,3.0 150,0.6 152,3.0 154,0.6 156,3.0 158,0.6 160,3.0 162,0.6 164,3.0 166,0.6 168,3.0 170,0.6 172,3.0 174,0.6 176,3.0 178,0.6 180,3.0 182,0.6 184,3.0 186,0.6 188,3.0 190,0.6 192,3.0 194,0.6 196,3.0 198,0.6 200,3.0 202,0.6 204,3.0 206,0.6 208,3.0 210,0.6 212,3.0 214,0.6 216,3.0 218,0.6 220,3.0 222,0.6 224,3.0 226,0.6 228,3.0 230,0.6 232,3.0 234,0.6 236,3.0 238,0.6 240,3.0 242,0.6 244,3.0 246,0.6 248,3.0 250,0.6 252,3.0 254,0.6 256,3.0 258,0.6 260,3.0 262,0.6 264,3.0 266,0.6 268,3.0 270,0.6 272,3.0 274,0.6 276,3.0 278,0.6 280,3.0 282,0.6 284,3.0 286,0.6 288,3.0 290,0.6 292,3.0 294,0.6 296,3.0 298,0.6 300,3.0 302,0.6 304,3.0 306,0.6 308,3.0 310,0.6 312,3.0 314,0.6 316,3.0 318,0.6 320,3.0 322,0.6 324,3.0 326,0.6 328,3.0 330,0.6 332,3.0 334,0.6 336,3.0 338,0.6 340,3.0 342,0.6 344,3.0 346,0.6 348,3.0 350,0.6 352,3.0 354,0.6 356,3.0 358,0.6 360,3.0 362,0.6 364,3.0 366,0.6 368,3.0 370,0.6 372,3.0 374,0.6 376,3.0 378,0.6 380,3.0 382,0.6 384,3.0 386,0.6 388,3.0 390,0.6 392,3.0 394,0.6 396,3.0 398,0.6 400,3.0 402,0.6 404,3.0 406,0.6 408,3.0 410,0.6 412,3.0 414,0.6 416,3.0 418,0.6 420,3.0 422,0.6 424,3.0 426,0.6 428,3.0 430,0.6 432,3.0 434,0.6 436,3.0 438,0.6 440,3.0 442,0.6 444,3.0 446,0.6 448,3.0 450,0.6 452,3.0 454,0.6 456,3.0 458,0.6 460,3.0 462,0.6 464,3.0 466,0.6 468,3.0 470,0.6 472,3.0 474,0.6 476,3.0 478,0.6 480,3.0 482,0.6 484,3.0 486,0.6 488,3.0 490,0.6 492,3.0" stroke="#c9a133" stroke-width="1.1"/></svg>
<svg style="position:absolute;left:1090px;top:550.6px" width="72" height="4" viewBox="0 0 72 4" fill="none"><polyline points="0,3.0 2,0.6 4,3.0 6,0.6 8,3.0 10,0.6 12,3.0 14,0.6 16,3.0 18,0.6 20,3.0 22,0.6 24,3.0 26,0.6 28,3.0 30,0.6 32,3.0 34,0.6 36,3.0 38,0.6 40,3.0 42,0.6 44,3.0 46,0.6 48,3.0 50,0.6 52,3.0 54,0.6 56,3.0 58,0.6 60,3.0 62,0.6 64,3.0 66,0.6 68,3.0 70,0.6 72,3.0" stroke="#5a9c60" stroke-width="1.1"/></svg>
<svg style="position:absolute;left:2348px;top:135.4px" width="18" height="17" viewBox="0 0 18 17" fill="none" ><path d="M9 1 L17.4 16 H0.6 Z" fill="#d6ae58" stroke="#d6ae58" stroke-width="1" stroke-linejoin="round"/><path d="M9 6.2 V11" stroke="#1e1f22" stroke-width="2.2"/><rect x="7.9" y="12.4" width="2.2" height="2.2" fill="#1e1f22"/></svg>
<div style="position:absolute;left:2370.60px;top:131px;height:30px;line-height:30px;font-family:'Liberation Sans',sans-serif;font-size:19.5px;color:#bcbec4;white-space:pre;">4</div>
<svg style="position:absolute;left:2396px;top:136px" width="18" height="18" viewBox="0 0 18 18" fill="none" ><path d="M2 7.2 L6.4 11.6 L15.4 2" stroke="#499c54" stroke-width="3.9" stroke-linejoin="miter"/><path d="M0.5 16.6 L3.3 14 L6 16.6 L8.8 14 L11.5 16.6 L14.3 14 L17 16.6" stroke="#499c54" stroke-width="1.5"/></svg>
<div style="position:absolute;left:2417.90px;top:131px;height:30px;line-height:30px;font-family:'Liberation Sans',sans-serif;font-size:19.5px;color:#bcbec4;white-space:pre;">1</div>
<svg style="position:absolute;left:2443.3999999999996px;top:140.2px" width="13.6" height="8" viewBox="-1 -1 13.6 8" fill="none" ><path d="M0 6 L5.8 0 L11.6 6" stroke="#bcbec4" stroke-width="1.5" stroke-linecap="round" stroke-linejoin="round"/></svg>
<svg style="position:absolute;left:2474.0px;top:140.2px" width="13.6" height="8" viewBox="-1 -1 13.6 8" fill="none" ><path d="M0 0 L5.8 6 L11.6 0" stroke="#bcbec4" stroke-width="1.5" stroke-linecap="round" stroke-linejoin="round"/></svg>
<div style="position:absolute;left:2486px;top:577px;width:12.5px;height:639px;background:rgba(140,150,175,0.36);"></div>
<div style="position:absolute;left:2486px;top:1216px;width:12.5px;height:230px;background:rgba(128,130,135,0.40);"></div>
<div style="position:absolute;left:2478px;top:533px;width:21px;height:3px;background:#d6ae58;"></div>
<div style="position:absolute;left:2478px;top:729.6px;width:21px;height:3px;background:#5f8f76;"></div>
<div style="position:absolute;left:2478px;top:967.6px;width:21px;height:3px;background:#d6ae58;"></div>
<div style="position:absolute;left:2478px;top:1229.2px;width:21px;height:3px;background:#d6ae58;"></div>
<div style="position:absolute;left:2478px;top:1272.6px;width:21px;height:3px;background:#d6ae58;"></div>
<div style="position:absolute;left:2486px;top:967.6px;width:12.5px;height:3px;background:#c9ad6e;"></div>
<div style="position:absolute;left:2486px;top:1229.2px;width:12.5px;height:3px;background:#c9ad6e;"></div>
<div style="position:absolute;left:2486px;top:1272.6px;width:12.5px;height:3px;background:#c9ad6e;"></div>
<div style="position:absolute;left:2486px;top:729.6px;width:12.5px;height:3px;background:#748f8b;"></div>
<div style="position:absolute;left:552px;top:1447.2px;width:1947px;height:1.8px;background:#313438;"></div>
<div style="position:absolute;left:568.00px;top:1452px;height:30px;line-height:30px;font-family:'Liberation Sans',sans-serif;font-size:20px;color:#a9acb3;white-space:pre;letter-spacing:0.486px;">manifest</div>
<svg style="position:absolute;left:21px;top:1500px" width="12" height="12" viewBox="0 0 12 12" fill="none" ><rect x="1" y="1" width="10" height="10" rx="2.4" fill="#25324d" stroke="#5083ee" stroke-width="1.7"/></svg>
<div style="position:absolute;left:40.00px;top:1491px;height:30px;line-height:30px;font-family:'Liberation Sans',sans-serif;font-size:21px;color:#a4a7ae;white-space:pre;letter-spacing:0.300px;">Task5</div>
<svg style="position:absolute;left:109.6px;top:1499.9px" width="8" height="13" viewBox="-1 -1 8 13" fill="none" ><path d="M0 0 L6 5.5 L0 11" stroke="#a4a7ae" stroke-width="1.5" stroke-linecap="round" stroke-linejoin="round"/></svg>
<svg style="position:absolute;left:132.2px;top:1500px" width="12" height="12" viewBox="0 0 12 12" fill="none" ><rect x="1" y="1" width="10" height="10" rx="2.4" fill="#25324d" stroke="#5083ee" stroke-width="1.7"/></svg>
<div style="position:absolute;left:149.60px;top:1491px;height:30px;line-height:30px;font-family:'Liberation Sans',sans-serif;font-size:21px;color:#a4a7ae;white-space:pre;letter-spacing:0.500px;">app</div>
<svg style="position:absolute;left:200.0px;top:1499.9px" width="8" height="13" viewBox="-1 -1 8 13" fill="none" ><path d="M0 0 L6 5.5 L0 11" stroke="#a4a7ae" stroke-width="1.5" stroke-linecap="round" stroke-linejoin="round"/></svg>
<div style="position:absolute;left:221.60px;top:1491px;height:30px;line-height:30px;font-family:'Liberation Sans',sans-serif;font-size:21px;color:#a4a7ae;white-space:pre;letter-spacing:-0.300px;">src</div>
<svg style="position:absolute;left:264.6px;top:1499.9px" width="8" height="13" viewBox="-1 -1 8 13" fill="none" ><path d="M0 0 L6 5.5 L0 11" stroke="#a4a7ae" stroke-width="1.5" stroke-linecap="round" stroke-linejoin="round"/></svg>
<svg style="position:absolute;left:287px;top:1500px" width="12" height="12" viewBox="0 0 12 12" fill="none" ><rect x="1" y="1" width="10" height="10" rx="2.4" fill="#25324d" stroke="#5083ee" stroke-width="1.7"/></svg>
<div style="position:absolute;left:304.60px;top:1491px;height:30px;line-height:30px;font-family:'Liberation Sans',sans-serif;font-size:21px;color:#a4a7ae;white-space:pre;letter-spacing:0.133px;">main</div>
<svg style="position:absolute;left:363.4px;top:1499.9px" width="8" height="13" viewBox="-1 -1 8 13" fill="none" ><path d="M0 0 L6 5.5 L0 11" stroke="#a4a7ae" stroke-width="1.5" stroke-linecap="round" stroke-linejoin="round"/></svg>
<svg style="position:absolute;left:388.8px;top:1496.4px" width="18.4" height="18.4" viewBox="0 0 19 19" fill="none" ><rect x="1" y="1" width="17" height="17" rx="3.2" fill="#25352b" stroke="#3ddc84" stroke-width="1.9"/><path d="M5.4 13.5 V5.8 L9.5 12.4 L13.6 5.8 V13.5" stroke="#3ddc84" stroke-width="1.6" stroke-linejoin="round" stroke-linecap="round"/></svg>
<div style="position:absolute;left:417.00px;top:1491px;height:30px;line-height:30px;font-family:'Liberation Sans',sans-serif;font-size:21px;color:#a4a7ae;white-space:pre;letter-spacing:-0.078px;">AndroidManifest.xml</div>
<div style="position:absolute;left:1921.60px;top:1491px;height:30px;line-height:30px;font-family:'Liberation Sans',sans-serif;font-size:21px;color:#a4a7ae;white-space:pre;letter-spacing:-0.878px;">53:1 (1214</div>
<div style="position:absolute;left:2021.30px;top:1491px;height:30px;line-height:30px;font-family:'Liberation Sans','Noto Sans CJK SC',sans-serif;font-size:19px;color:#a4a7ae;white-space:pre;letter-spacing:-1.900px;">字符</div>
<div style="position:absolute;left:2056.80px;top:1491px;height:30px;line-height:30px;font-family:'Liberation Sans',sans-serif;font-size:21px;color:#a4a7ae;white-space:pre;letter-spacing:0.300px;">, 26</div>
<div style="position:absolute;left:2098.20px;top:1491px;height:30px;line-height:30px;font-family:'Liberation Sans','Noto Sans CJK SC',sans-serif;font-size:19px;color:#a4a7ae;white-space:pre;">行</div>
<div style="position:absolute;left:2122.20px;top:1491px;height:30px;line-height:30px;font-family:'Liberation Sans','Noto Sans CJK SC',sans-serif;font-size:19px;color:#a4a7ae;white-space:pre;letter-spacing:-1.000px;">换行符</div>
<div style="position:absolute;left:2177.60px;top:1491px;height:30px;line-height:30px;font-family:'Liberation Sans',sans-serif;font-size:21px;color:#a4a7ae;white-space:pre;">)</div>
<div style="position:absolute;left:2207.80px;top:1491px;height:30px;line-height:30px;font-family:'Liberation Sans',sans-serif;font-size:21px;color:#a4a7ae;white-space:pre;letter-spacing:-2.067px;">CRLF</div>
<div style="position:absolute;left:2279.60px;top:1491px;height:30px;line-height:30px;font-family:'Liberation Sans',sans-serif;font-size:21px;color:#6f737a;white-space:pre;letter-spacing:0.000px;">UTF-8</div>
<svg style="position:absolute;left:2364.2px;top:1496.0px" width="21" height="19.5" viewBox="0 0 21 19.5" fill="none" ><path d="M4 1 H17.5 Q19.5 1 19.5 3 V18 L13 14.6 H4 Q2 14.6 2 12.6 V3 Q2 1 4 1 Z" stroke="#ced0d6" stroke-width="1.8" stroke-linejoin="round"/><path d="M10.7 4.4 V9" stroke="#ced0d6" stroke-width="1.9"/><circle cx="10.7" cy="11.4" r="1.1" fill="#ced0d6"/></svg>
<div style="position:absolute;left:2411.70px;top:1491px;height:30px;line-height:30px;font-family:'Liberation Sans',sans-serif;font-size:21px;color:#a4a7ae;white-space:pre;">4</div>
<div style="position:absolute;left:2430.00px;top:1491px;height:30px;line-height:30px;font-family:'Liberation Sans','Noto Sans CJK SC',sans-serif;font-size:19px;color:#a4a7ae;white-space:pre;letter-spacing:-0.350px;">个空格</div>
<svg style="position:absolute;left:2513.8px;top:1494.8px" width="21" height="21" viewBox="0 0 21 21" fill="none" ><rect x="1" y="9.4" width="13.2" height="10.4" rx="2.2" stroke="#ced0d6" stroke-width="1.8"/><path d="M7.6 13 V16.2" stroke="#ced0d6" stroke-width="1.9" stroke-linecap="round"/><path d="M10.6 9.2 V5.6 A4.2 4.2 0 0 1 19 5.6 V7" stroke="#ced0d6" stroke-width="1.8" stroke-linecap="round"/></svg>
</body></html>
